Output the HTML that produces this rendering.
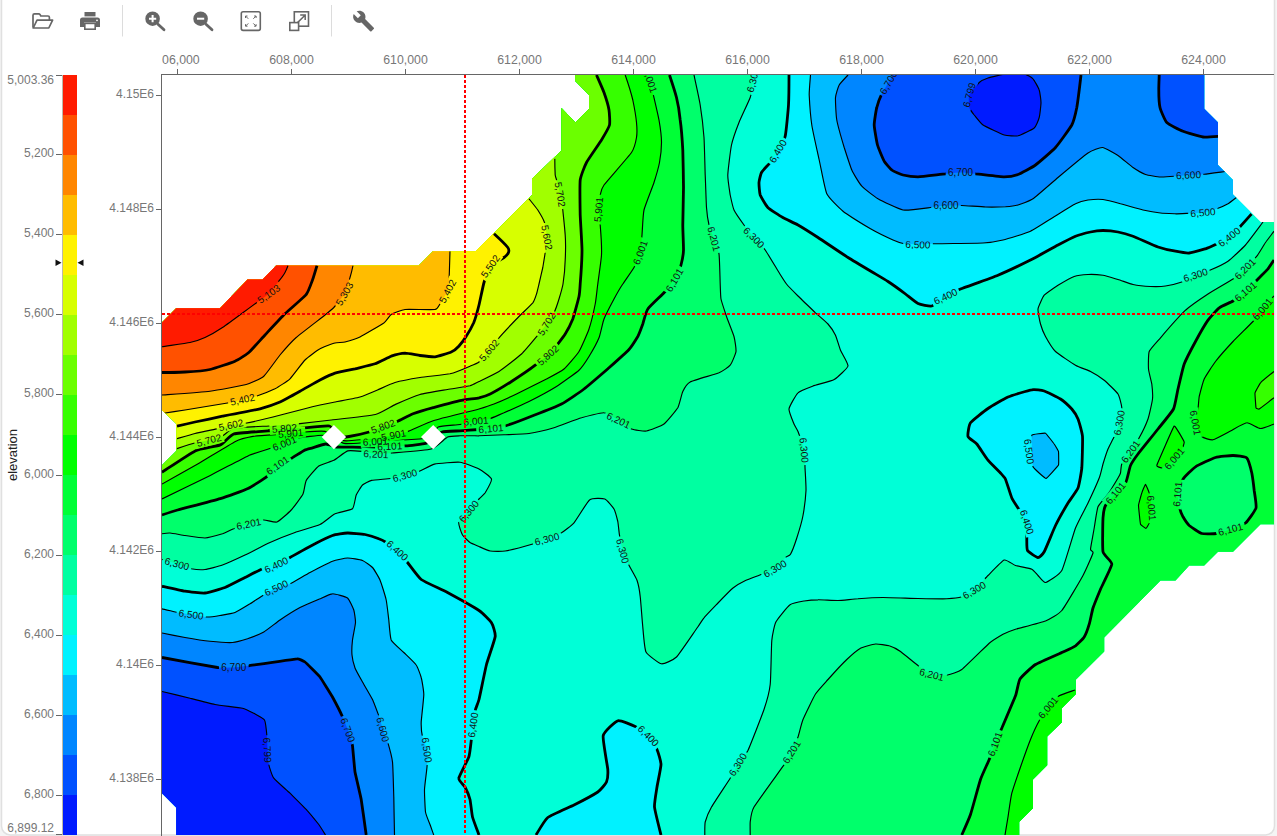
<!DOCTYPE html>
<html><head><meta charset="utf-8"><title>Contour map</title>
<style>html,body{margin:0;padding:0;background:#f4f4f4;overflow:hidden}svg{display:block}text{font-family:"Liberation Sans",sans-serif}</style></head><body>
<svg width="1277" height="836" viewBox="0 0 1277 836">
<rect x="1.5" y="-20" width="1273" height="855" rx="9" ry="9" fill="#fff" stroke="#e0e0e0" stroke-width="1.5"/>

<g id="toolbar">
<line x1="122.5" y1="5" x2="122.5" y2="36.5" stroke="#dcdcdc" stroke-width="1"/>
<line x1="331.5" y1="5" x2="331.5" y2="36.5" stroke="#dcdcdc" stroke-width="1"/>
<g fill="none" stroke="#666" stroke-width="1.7" stroke-linejoin="round">
<path d="M33 27.5 V15.3 Q33 13.8 34.5 13.8 H38.6 Q39.6 13.8 40.1 14.7 L40.8 16 H48 Q49.4 16 49.4 17.4 V20"/>
<path d="M33.2 28 L37 20.2 H52.6 L48.8 28 Z"/>
</g>
<g fill="#666">
<rect x="84.5" y="12" width="11" height="4.4"/>
<path d="M82.5 17.6 H97.5 Q100 17.6 100 20.1 V27 H96 V22.6 H84 V27 H80 V20.1 Q80 17.6 82.5 17.6 Z"/>
<rect x="84.8" y="23.4" width="10.4" height="5.8" fill="#fff" stroke="#666" stroke-width="1.6"/>
<circle cx="97" cy="20.3" r="0.9" fill="#fff"/>
</g>
<g>
<circle cx="152.6" cy="18.7" r="6.1" fill="#666" stroke="#666" stroke-width="2.4"/>
<path d="M149 18.7 H156.2 M152.6 15.1 V22.3" stroke="#fff" stroke-width="2" fill="none"/>
<line x1="158" y1="24.2" x2="164" y2="29.8" stroke="#666" stroke-width="2.8" stroke-linecap="round"/>
<circle cx="200.6" cy="18.7" r="6.1" fill="#666" stroke="#666" stroke-width="2.4"/>
<path d="M197 18.7 H204.2" stroke="#fff" stroke-width="2" fill="none"/>
<line x1="206" y1="24.2" x2="212" y2="29.8" stroke="#666" stroke-width="2.8" stroke-linecap="round"/>
</g>
<g fill="none" stroke="#666" stroke-width="1.6">
<rect x="241.3" y="11.8" width="19" height="18.6" rx="1.8"/>
<g stroke-width="1">
<path d="M245.5 18 V16 H247.5 M245.7 16.2 L248.3 18.8"/>
<path d="M256.1 18 V16 H254.1 M255.9 16.2 L253.3 18.8"/>
<path d="M245.5 24.2 V26.2 H247.5 M245.7 26 L248.3 23.4"/>
<path d="M256.1 24.2 V26.2 H254.1 M255.9 26 L253.3 23.4"/>
</g>
</g>
<g fill="none" stroke="#666" stroke-width="1.6">
<rect x="294.3" y="11.8" width="14.2" height="14.4"/>
<rect x="289.8" y="22.6" width="8.8" height="7.8" fill="#fff"/>
<path d="M297.5 22.6 L305 15.2 M300.2 15 H305.2 V20" stroke-width="1.5"/>
</g>
<path transform="translate(352.2,9.6) scale(0.95)" fill="#666" d="M22.7 19l-9.1-9.1c.9-2.3.4-5-1.5-6.9-2-2-5-2.4-7.4-1.3L9 6 6 9 1.6 4.7C.4 7.1.9 10.1 2.9 12.1c1.9 1.9 4.6 2.4 6.9 1.5l9.1 9.1c.4.4 1 .4 1.4 0l2.3-2.3c.5-.4.5-1.1.1-1.4z"/>
</g>

<rect x="63" y="75" width="14" height="40" fill="#ff1b00"/>
<rect x="63" y="115" width="14" height="40" fill="#ff5100"/>
<rect x="63" y="155" width="14" height="40" fill="#ff8600"/>
<rect x="63" y="195" width="14" height="40" fill="#ffbc00"/>
<rect x="63" y="235" width="14" height="40" fill="#fff200"/>
<rect x="63" y="275" width="14" height="40" fill="#d7ff00"/>
<rect x="63" y="315" width="14" height="40" fill="#a1ff00"/>
<rect x="63" y="355" width="14" height="40" fill="#6bff00"/>
<rect x="63" y="395" width="14" height="40" fill="#36ff00"/>
<rect x="63" y="435" width="14" height="40" fill="#00ff00"/>
<rect x="63" y="475" width="14" height="40" fill="#00ff36"/>
<rect x="63" y="515" width="14" height="40" fill="#00ff6b"/>
<rect x="63" y="555" width="14" height="40" fill="#00ffa1"/>
<rect x="63" y="595" width="14" height="40" fill="#00ffd7"/>
<rect x="63" y="635" width="14" height="40" fill="#00f2ff"/>
<rect x="63" y="675" width="14" height="40" fill="#00bcff"/>
<rect x="63" y="715" width="14" height="40" fill="#0086ff"/>
<rect x="63" y="755" width="14" height="40" fill="#0051ff"/>
<rect x="63" y="795" width="14" height="40" fill="#001bff"/>
<line x1="62.5" y1="75" x2="62.5" y2="835" stroke="#bdb9a8" stroke-width="1"/>
<g fill="#777" font-size="12px" text-anchor="end">
<text x="54" y="157.3">5,200</text>
<text x="54" y="237.3">5,400</text>
<text x="54" y="317.3">5,600</text>
<text x="54" y="397.3">5,800</text>
<text x="54" y="478.3">6,000</text>
<text x="54" y="558.3">6,200</text>
<text x="54" y="638.3">6,400</text>
<text x="54" y="718.3">6,600</text>
<text x="54" y="798.3">6,800</text>
<text x="54" y="83.6">5,003.36</text>
<text x="54" y="831.8">6,899.12</text>
</g>
<g stroke="#666" stroke-width="1">
<line x1="56" y1="154.5" x2="62" y2="154.5"/>
<line x1="56" y1="234.5" x2="62" y2="234.5"/>
<line x1="56" y1="314.5" x2="62" y2="314.5"/>
<line x1="56" y1="394.5" x2="62" y2="394.5"/>
<line x1="56" y1="475.5" x2="62" y2="475.5"/>
<line x1="56" y1="555.5" x2="62" y2="555.5"/>
<line x1="56" y1="635.5" x2="62" y2="635.5"/>
<line x1="56" y1="715.5" x2="62" y2="715.5"/>
<line x1="56" y1="795.5" x2="62" y2="795.5"/>
<line x1="56" y1="75.5" x2="62" y2="75.5"/><line x1="56" y1="834.5" x2="62" y2="834.5"/>
</g>
<path d="M55.5 259.5 L61.5 262.7 L55.5 266 Z M83.5 259.5 L77.5 262.7 L83.5 266 Z" fill="#111"/>
<text transform="translate(16.8,455) rotate(-90)" text-anchor="middle" font-size="13px" fill="#222">elevation</text>
<g stroke="#666" stroke-width="1">
<line x1="161.5" y1="74" x2="161.5" y2="836"/><line x1="161" y1="74.5" x2="1274" y2="74.5"/>
<line x1="177.5" y1="69" x2="177.5" y2="74"/>
<line x1="291.5" y1="69" x2="291.5" y2="74"/>
<line x1="405.5" y1="69" x2="405.5" y2="74"/>
<line x1="519.5" y1="69" x2="519.5" y2="74"/>
<line x1="633.5" y1="69" x2="633.5" y2="74"/>
<line x1="747.5" y1="69" x2="747.5" y2="74"/>
<line x1="861.5" y1="69" x2="861.5" y2="74"/>
<line x1="975.5" y1="69" x2="975.5" y2="74"/>
<line x1="1089.5" y1="69" x2="1089.5" y2="74"/>
<line x1="1203.5" y1="69" x2="1203.5" y2="74"/>
<line x1="156" y1="95.5" x2="161" y2="95.5"/>
<line x1="156" y1="209.5" x2="161" y2="209.5"/>
<line x1="156" y1="323.5" x2="161" y2="323.5"/>
<line x1="156" y1="437.5" x2="161" y2="437.5"/>
<line x1="156" y1="551.5" x2="161" y2="551.5"/>
<line x1="156" y1="665.5" x2="161" y2="665.5"/>
<line x1="156" y1="779.5" x2="161" y2="779.5"/>
</g>
<g fill="#777" font-size="12px">
<g font-size="12.3px">
<text x="199.7" y="63.5" text-anchor="end">06,000</text></g>
<g font-size="12.3px">
<text x="291.5" y="63.5" text-anchor="middle">608,000</text></g>
<g font-size="12.3px">
<text x="405.5" y="63.5" text-anchor="middle">610,000</text></g>
<g font-size="12.3px">
<text x="519.5" y="63.5" text-anchor="middle">612,000</text></g>
<g font-size="12.3px">
<text x="633.5" y="63.5" text-anchor="middle">614,000</text></g>
<g font-size="12.3px">
<text x="747.5" y="63.5" text-anchor="middle">616,000</text></g>
<g font-size="12.3px">
<text x="861.5" y="63.5" text-anchor="middle">618,000</text></g>
<g font-size="12.3px">
<text x="975.5" y="63.5" text-anchor="middle">620,000</text></g>
<g font-size="12.3px">
<text x="1089.5" y="63.5" text-anchor="middle">622,000</text></g>
<g font-size="12.3px">
<text x="1203.5" y="63.5" text-anchor="middle">624,000</text></g>
<text x="154" y="98.0" text-anchor="end">4.15E6</text>
<text x="154" y="212.0" text-anchor="end">4.148E6</text>
<text x="154" y="326.0" text-anchor="end">4.146E6</text>
<text x="154" y="440.0" text-anchor="end">4.144E6</text>
<text x="154" y="554.0" text-anchor="end">4.142E6</text>
<text x="154" y="668.0" text-anchor="end">4.14E6</text>
<text x="154" y="782.0" text-anchor="end">4.138E6</text>
</g>
<defs><clipPath id="dataclip"><path d="M162 322.5L176.2 308.2L220 308.2L247.5 279.5L262.5 279.5L276.2 265.5L418.8 265.5L433 251.2L475.5 251.2L532 195L532 178.8L561.5 150.5L561.5 108L575.4 122.6L589 108.8L589 95L575.2 81L575.2 75L1204.2 75L1204.2 108.8L1218 122.5L1218 165L1233 180L1233 194.5L1260.5 222L1274 222L1274 524.2L1260.5 524.2L1233 551.8L1218 551.8L1204.2 565.5L1189.2 565.5L1175.5 580.5L1160.5 580.5L1104.2 637.5L1104.2 651.5L1076 679.5L1076 694L1061.8 708.2L1061.8 722.5L1047.2 736.5L1047.2 765.2L1033 779.5L1033 808.2L1019.2 822L1019.2 835L176.2 835L176.2 807.5L162 793.2L162 465.3L176.3 450.9L176.3 423.8L162 410Z"/></clipPath>
<mask id="lblmask" maskUnits="userSpaceOnUse" x="150" y="60" width="1140" height="790"><rect x="150" y="60" width="1140" height="790" fill="#fff"/>
<rect x="-14.8" y="-5.5" width="29.6" height="11" fill="#000" transform="translate(268.8,293.8) rotate(-35)"/>
<rect x="-14.8" y="-5.5" width="29.6" height="11" fill="#000" transform="translate(344.5,293.8) rotate(-60)"/>
<rect x="-14.8" y="-5.5" width="29.6" height="11" fill="#000" transform="translate(447.5,291.2) rotate(-62)"/>
<rect x="-14.8" y="-5.5" width="29.6" height="11" fill="#000" transform="translate(242.5,399.5) rotate(-12)"/>
<rect x="-14.8" y="-5.5" width="29.6" height="11" fill="#000" transform="translate(490.2,266.2) rotate(-55)"/>
<rect x="-14.8" y="-5.5" width="29.6" height="11" fill="#000" transform="translate(547,237.5) rotate(80)"/>
<rect x="-14.8" y="-5.5" width="29.6" height="11" fill="#000" transform="translate(489,350.2) rotate(-50)"/>
<rect x="-14.8" y="-5.5" width="29.6" height="11" fill="#000" transform="translate(231,425) rotate(-12)"/>
<rect x="-14.8" y="-5.5" width="29.6" height="11" fill="#000" transform="translate(560.2,194.5) rotate(80)"/>
<rect x="-14.8" y="-5.5" width="29.6" height="11" fill="#000" transform="translate(546.5,324) rotate(-58)"/>
<rect x="-14.8" y="-5.5" width="29.6" height="11" fill="#000" transform="translate(209,440.2) rotate(-15)"/>
<rect x="-14.8" y="-5.5" width="29.6" height="11" fill="#000" transform="translate(547.8,355.2) rotate(-42)"/>
<rect x="-14.8" y="-5.5" width="29.6" height="11" fill="#000" transform="translate(383,426.4) rotate(-20)"/>
<rect x="-14.8" y="-5.5" width="29.6" height="11" fill="#000" transform="translate(284.4,428.2) rotate(-5)"/>
<rect x="-14.8" y="-5.5" width="29.6" height="11" fill="#000" transform="translate(598.5,209.5) rotate(-85)"/>
<rect x="-14.8" y="-5.5" width="29.6" height="11" fill="#000" transform="translate(393.6,435.2) rotate(-12)"/>
<rect x="-14.8" y="-5.5" width="29.6" height="11" fill="#000" transform="translate(290.7,433.3) rotate(-5)"/>
<rect x="-14.8" y="-5.5" width="29.6" height="11" fill="#000" transform="translate(650.3,80.5) rotate(72)"/>
<rect x="-14.8" y="-5.5" width="29.6" height="11" fill="#000" transform="translate(640.2,252.5) rotate(-70)"/>
<rect x="-14.8" y="-5.5" width="29.6" height="11" fill="#000" transform="translate(476,421) rotate(-5)"/>
<rect x="-14.8" y="-5.5" width="29.6" height="11" fill="#000" transform="translate(375.4,441.5) rotate(-3)"/>
<rect x="-14.8" y="-5.5" width="29.6" height="11" fill="#000" transform="translate(284.4,443.3) rotate(-22)"/>
<rect x="-14.8" y="-5.5" width="29.6" height="11" fill="#000" transform="translate(674.5,280) rotate(-60)"/>
<rect x="-14.8" y="-5.5" width="29.6" height="11" fill="#000" transform="translate(491,428.5) rotate(-5)"/>
<rect x="-14.8" y="-5.5" width="29.6" height="11" fill="#000" transform="translate(389.8,446.3) rotate(-3)"/>
<rect x="-14.8" y="-5.5" width="29.6" height="11" fill="#000" transform="translate(277.5,465.3) rotate(-35)"/>
<rect x="-14.8" y="-5.5" width="29.6" height="11" fill="#000" transform="translate(714,238.8) rotate(75)"/>
<rect x="-14.8" y="-5.5" width="29.6" height="11" fill="#000" transform="translate(618.5,420.2) rotate(25)"/>
<rect x="-14.8" y="-5.5" width="29.6" height="11" fill="#000" transform="translate(376,454) rotate(3)"/>
<rect x="-14.8" y="-5.5" width="29.6" height="11" fill="#000" transform="translate(248.8,523.8) rotate(-12)"/>
<rect x="-14.8" y="-5.5" width="29.6" height="11" fill="#000" transform="translate(753,80) rotate(-75)"/>
<rect x="-14.8" y="-5.5" width="29.6" height="11" fill="#000" transform="translate(754,237.5) rotate(45)"/>
<rect x="-14.8" y="-5.5" width="29.6" height="11" fill="#000" transform="translate(804.2,450.2) rotate(85)"/>
<rect x="-14.8" y="-5.5" width="29.6" height="11" fill="#000" transform="translate(775,568.5) rotate(-30)"/>
<rect x="-14.8" y="-5.5" width="29.6" height="11" fill="#000" transform="translate(622.8,551) rotate(75)"/>
<rect x="-14.8" y="-5.5" width="29.6" height="11" fill="#000" transform="translate(547,539) rotate(-15)"/>
<rect x="-14.8" y="-5.5" width="29.6" height="11" fill="#000" transform="translate(468.8,511.2) rotate(-50)"/>
<rect x="-14.8" y="-5.5" width="29.6" height="11" fill="#000" transform="translate(404.9,475.4) rotate(-15)"/>
<rect x="-14.8" y="-5.5" width="29.6" height="11" fill="#000" transform="translate(177,563.8) rotate(15)"/>
<rect x="-14.8" y="-5.5" width="29.6" height="11" fill="#000" transform="translate(1195.5,275) rotate(-18)"/>
<rect x="-14.8" y="-5.5" width="29.6" height="11" fill="#000" transform="translate(1119.2,422.8) rotate(-80)"/>
<rect x="-14.8" y="-5.5" width="29.6" height="11" fill="#000" transform="translate(974.2,590) rotate(-30)"/>
<rect x="-14.8" y="-5.5" width="29.6" height="11" fill="#000" transform="translate(737.8,764.5) rotate(-58)"/>
<rect x="-14.8" y="-5.5" width="29.6" height="11" fill="#000" transform="translate(777.8,151.2) rotate(-60)"/>
<rect x="-14.8" y="-5.5" width="29.6" height="11" fill="#000" transform="translate(945.5,296.5) rotate(-25)"/>
<rect x="-14.8" y="-5.5" width="29.6" height="11" fill="#000" transform="translate(1229.2,237) rotate(-38)"/>
<rect x="-14.8" y="-5.5" width="29.6" height="11" fill="#000" transform="translate(276.2,565) rotate(-25)"/>
<rect x="-14.8" y="-5.5" width="29.6" height="11" fill="#000" transform="translate(397.5,550.5) rotate(42)"/>
<rect x="-14.8" y="-5.5" width="29.6" height="11" fill="#000" transform="translate(473,725) rotate(-82)"/>
<rect x="-14.8" y="-5.5" width="29.6" height="11" fill="#000" transform="translate(648.5,735.8) rotate(45)"/>
<rect x="-14.8" y="-5.5" width="29.6" height="11" fill="#000" transform="translate(1027,522) rotate(72)"/>
<rect x="-14.8" y="-5.5" width="29.6" height="11" fill="#000" transform="translate(918,244.5) rotate(2)"/>
<rect x="-14.8" y="-5.5" width="29.6" height="11" fill="#000" transform="translate(1203,212.5) rotate(-5)"/>
<rect x="-14.8" y="-5.5" width="29.6" height="11" fill="#000" transform="translate(191.2,614.5) rotate(8)"/>
<rect x="-14.8" y="-5.5" width="29.6" height="11" fill="#000" transform="translate(276.2,588) rotate(-25)"/>
<rect x="-14.8" y="-5.5" width="29.6" height="11" fill="#000" transform="translate(427,750) rotate(82)"/>
<rect x="-14.8" y="-5.5" width="29.6" height="11" fill="#000" transform="translate(1029.2,451.5) rotate(82)"/>
<rect x="-14.8" y="-5.5" width="29.6" height="11" fill="#000" transform="translate(946,205.5) rotate(0)"/>
<rect x="-14.8" y="-5.5" width="29.6" height="11" fill="#000" transform="translate(1188.5,175) rotate(-3)"/>
<rect x="-14.8" y="-5.5" width="29.6" height="11" fill="#000" transform="translate(383,729.5) rotate(75)"/>
<rect x="-14.8" y="-5.5" width="29.6" height="11" fill="#000" transform="translate(888.5,82.5) rotate(-60)"/>
<rect x="-14.8" y="-5.5" width="29.6" height="11" fill="#000" transform="translate(960.5,172.5) rotate(0)"/>
<rect x="-14.8" y="-5.5" width="29.6" height="11" fill="#000" transform="translate(233.8,667.5) rotate(0)"/>
<rect x="-14.8" y="-5.5" width="29.6" height="11" fill="#000" transform="translate(348,730) rotate(70)"/>
<rect x="-14.8" y="-5.5" width="29.6" height="11" fill="#000" transform="translate(969.2,95) rotate(-75)"/>
<rect x="-14.8" y="-5.5" width="29.6" height="11" fill="#000" transform="translate(267.5,750) rotate(87)"/>
<rect x="-14.8" y="-5.5" width="29.6" height="11" fill="#000" transform="translate(1245,268.8) rotate(-45)"/>
<rect x="-14.8" y="-5.5" width="29.6" height="11" fill="#000" transform="translate(1130.5,451.5) rotate(-55)"/>
<rect x="-14.8" y="-5.5" width="29.6" height="11" fill="#000" transform="translate(931.8,674.5) rotate(15)"/>
<rect x="-14.8" y="-5.5" width="29.6" height="11" fill="#000" transform="translate(791.5,752) rotate(-58)"/>
<rect x="-14.8" y="-5.5" width="29.6" height="11" fill="#000" transform="translate(1245.5,291.5) rotate(-40)"/>
<rect x="-14.8" y="-5.5" width="29.6" height="11" fill="#000" transform="translate(1115.5,493) rotate(-50)"/>
<rect x="-14.8" y="-5.5" width="29.6" height="11" fill="#000" transform="translate(995,744) rotate(-70)"/>
<rect x="-14.8" y="-5.5" width="29.6" height="11" fill="#000" transform="translate(1230.5,529.2) rotate(-15)"/>
<rect x="-14.8" y="-5.5" width="29.6" height="11" fill="#000" transform="translate(1177.5,494.2) rotate(-85)"/>
<rect x="-14.8" y="-5.5" width="29.6" height="11" fill="#000" transform="translate(1262.5,309) rotate(-50)"/>
<rect x="-14.8" y="-5.5" width="29.6" height="11" fill="#000" transform="translate(1195.5,422.8) rotate(80)"/>
<rect x="-14.8" y="-5.5" width="29.6" height="11" fill="#000" transform="translate(1174.2,458.5) rotate(-50)"/>
<rect x="-14.8" y="-5.5" width="29.6" height="11" fill="#000" transform="translate(1151.8,508) rotate(85)"/>
<rect x="-14.8" y="-5.5" width="29.6" height="11" fill="#000" transform="translate(1048,707.5) rotate(-50)"/>
</mask>
<clipPath id="mapclip"><rect x="162" y="75" width="1112.5" height="760"/></clipPath></defs>
<g clip-path="url(#mapclip)">
<g clip-path="url(#dataclip)">
<rect x="160" y="70" width="1120" height="770" fill="#00ffa1"/>
<path d="M694 75C694.5 77.4 699.5 100 700.2 105C701 110 703.6 131.9 704 137.5C704.4 143.1 705 169.4 705.2 175C705.5 180.6 706.2 203.5 706.5 207.5C706.8 211.5 708.4 222.5 709 225C709.6 227.5 713.2 236.4 714 238.8C714.8 241.1 718.5 250.1 719 253.8C719.5 257.4 720.1 280.4 720.2 284C720.4 287.6 720.5 296.4 721 299C721.5 301.6 725.5 313.5 726.5 316.5C727.5 319.5 733.2 333.7 734 336.5C734.8 339.3 736.3 349.2 736 351.5C735.7 353.8 731.6 363.6 730.2 365.2C728.9 366.9 722.2 371.4 719 372.8C715.8 374.1 693.1 380.5 690.2 382C687.4 383.5 683.8 389.4 682.8 391.5C681.8 393.6 679.2 405.1 677.8 407.8C676.2 410.4 666.5 422.1 664 424C661.5 425.9 649.1 430.6 646.5 431C643.9 431.4 633.7 429.9 631.5 429C629.3 428.1 620.7 421.6 618.5 420.2C616.3 418.9 607 412.9 604 412.8C601 412.6 585.5 416.6 581.5 417.8C577.5 418.9 558.2 426.5 554 427.8C549.8 429 533 432.9 529 433.5C525 434.1 508 434.6 504 434.8C500 434.9 482.5 435.7 479 435.8C475.5 435.8 462.5 435.7 460 435.8C457.5 435.9 449.9 436 447.6 437.1C445.3 438.2 435.7 447.7 431.3 449C426.9 450.3 396.7 452.6 392.3 453C387.9 453.4 378.4 454.1 376 454C373.6 453.9 365.1 451.7 362.8 451.5C360.5 451.3 350 450.2 347.7 450.9C345.4 451.6 336.2 459.1 333.9 460.3C331.6 461.5 321 464.4 318.8 466C316.6 467.6 307.6 478.2 306.3 480.4C305 482.6 304.2 491.6 303 494C301.8 496.4 293.3 507.8 291.2 510C289.2 512.2 279.2 521.2 277 522C274.8 522.8 266 519.9 263.8 520C261.5 520.1 251.2 523 248.8 523.8C246.3 524.5 235.8 528 233.8 528.8C231.7 529.5 224.8 533 222.5 533.8C220.2 534.5 208 537.9 205 538C202 538.1 187.8 535.9 185 535.5C182.2 535.1 171.8 533.1 170 533C168.2 532.9 162.6 533.7 162 533.8L140 534L140 60L694 60Z" fill="#00ff6b"/>
<path d="M1274 231.2C1273.3 232.2 1266.9 240.5 1265.5 242.5C1264.1 244.5 1258.4 254.2 1256.8 256.2C1255.1 258.4 1246.9 266.9 1245 268.8C1243.1 270.6 1236 277 1233 279C1230 281 1211.8 291.5 1208 294C1204.2 296.5 1189.3 306.8 1185.5 310.2C1181.7 313.8 1163.4 334.4 1160.5 337.8C1157.6 341.1 1150.2 349 1149.2 351.5C1148.3 354 1148.3 366.4 1148.5 369C1148.7 371.6 1151.4 381.6 1151.8 384C1152.1 386.4 1152.8 396.2 1152.5 399C1152.2 401.8 1149.1 415.9 1148 419C1146.9 422.1 1140.7 435.1 1139.2 437.8C1137.8 440.4 1131.9 449.4 1130.5 451.5C1129.1 453.6 1122.5 462.3 1121.8 464C1121 465.7 1120.8 471.9 1120.5 473C1120.2 474.1 1119 476.3 1118 478C1117 479.7 1109.6 491.9 1108 494.2C1106.4 496.6 1099.1 504.1 1098 506.8C1096.9 509.4 1094.8 524.6 1094.2 528C1093.7 531.4 1090.6 547.2 1090.5 549.2C1090.4 551.2 1093.6 550.9 1093 553C1092.4 555.1 1085.5 570.9 1083 575.5C1080.5 580.1 1064.8 606.9 1061.8 610.5C1058.8 614.1 1049.2 619.5 1045.5 621C1041.8 622.5 1018.9 628.2 1015.5 629.2C1012.1 630.3 1005.1 633.1 1003 634.2C1000.9 635.4 992.5 640.4 989.2 643.2C986 646.1 965.1 667 961.8 669.5C958.4 672 949.9 674.6 947.5 675C945.1 675.4 934 675.2 931.8 674.5C929.5 673.8 921.8 668.3 919.2 666.5C916.8 664.7 902.9 653.2 900.5 651.5C898.1 649.8 891.2 646.4 889.2 645.8C887.2 645.1 877.8 643.8 875.5 644C873.2 644.2 862.8 647 860.5 648.2C858.2 649.5 849.4 657 846.8 659.5C844.1 662 830.5 676.7 828 679.5C825.5 682.3 817.5 690.8 815.5 694C813.5 697.2 804.4 716.1 803 719.5C801.6 722.9 798.9 734.4 798 737C797.1 739.6 792.5 749.9 791.5 752C790.5 754.1 788.2 758.9 785.2 763.2C782.2 767.6 756.8 802.3 754 807C751.2 811.7 750.5 819.8 750.2 822C750 824.2 750.2 834 750.2 835L750 850L1290 850L1290 231Z" fill="#00ff6b"/>
<path d="M669.5 75C670.1 76.8 675.6 93.9 676.5 97.5C677.4 101.1 679.8 115.8 680.2 120C680.8 124.2 682.5 144.6 682.8 150C683 155.4 683.5 181.5 683.5 187.5C683.5 193.5 682.8 220 682.8 225C682.8 230 683.6 246.8 683.5 250C683.4 253.2 681.6 262.8 681 265C680.4 267.2 677.3 274.9 676 277C674.7 279.1 667.5 288.9 665.2 291.5C663 294.1 649.5 306.4 647.8 309C646 311.6 643.5 321.8 642.8 324C642 326.2 638.9 334.5 637.8 336.5C636.6 338.5 631.3 347 629 349.5C626.7 352 612.6 364.6 609 367.8C605.4 370.9 587.8 386.1 584 389C580.2 391.9 565.5 401.9 561.5 404C557.5 406.1 538.5 413.5 534 415.2C529.5 417 508.7 424.9 505.2 426C501.8 427.1 493.1 428.2 491 428.5C488.9 428.8 481.5 429.3 479 429.5C476.5 429.7 463 430.6 460 430.8C457 431 444.1 431.4 442 432C439.9 432.6 434.5 437.1 433.2 438C431.9 438.9 427.8 442.8 425.6 443.4C423.4 444 408.4 445.7 405.5 445.9C402.6 446.1 392.2 446.1 389.8 446.3C387.4 446.5 378.6 447.7 375.4 447.8C372.2 447.9 353.4 447.2 350.3 447.1C347.2 447 338.4 447.2 336.4 447C334.4 446.8 327.7 443.9 325.8 444C323.9 444.1 314.3 447.3 312.6 447.8C310.9 448.3 306.3 449.3 304.5 450.2C302.7 451.1 292.9 457.6 290.7 458.8C288.5 460 279.4 463.9 277.5 465.3C275.6 466.7 269.2 474.7 266.8 476.6C264.4 478.5 251.7 486.7 248 488.5C244.3 490.3 225.9 496.9 220.3 498.6C214.7 500.3 182.3 508.7 177.6 510C172.9 511.3 163.2 514.6 162 515L140 515L140 60L669 60Z" fill="#00ff36"/>
<path d="M1274 260C1273.5 260.7 1269.4 267.1 1268 268.8C1266.6 270.4 1258.5 278.4 1256.8 280.2C1255 282.1 1247.4 289.8 1245.5 291.5C1243.6 293.2 1235.1 299.7 1233 301C1230.9 302.3 1221.2 306.2 1219.2 307.8C1217.2 309.3 1209.9 317.6 1208 320.2C1206.1 322.9 1197.4 338 1195.5 341.5C1193.6 345 1185.7 360.2 1184.2 364C1182.8 367.8 1178.9 385.4 1178 389C1177.1 392.6 1175.1 405.8 1173.5 409C1171.9 412.2 1160.8 425.4 1158 429C1155.2 432.6 1140.2 451.1 1138 454C1135.8 456.9 1131.5 463.3 1130.5 465.5C1129.5 467.7 1127.2 479.6 1126 481.8C1124.8 483.9 1117.1 491.1 1115.5 493C1113.9 494.9 1106.5 503.5 1105.5 505.5C1104.5 507.5 1103.2 514.3 1103 518C1102.8 521.7 1102.3 548 1103 551.8C1103.7 555.5 1112 561.2 1111.8 564.2C1111.5 567.2 1102 585.8 1100.5 589.2C1099 592.8 1093.9 605.2 1093 608C1092.1 610.8 1090 621.9 1089.2 624.2C1088.5 626.6 1085.3 635.3 1084.2 637C1083.2 638.7 1077.2 644.5 1075.5 645.8C1073.8 647 1066.2 650.5 1063 652C1059.8 653.5 1038.9 662.3 1035.5 664.5C1032.1 666.7 1021.6 676.5 1020 679C1018.4 681.5 1017 691.8 1015.5 695.8C1014 699.7 1003.4 724.4 1001.8 728.2C1000.1 732.1 996 741.5 995 744C994 746.5 990.4 756.7 989.2 759.5C988.1 762.3 982 775.1 980.5 779.5C979 783.9 972 810.1 970.5 814.5C969 818.9 962.5 833.4 961.8 835L961 850L1290 850L1290 260Z" fill="#00ff36"/>
<path d="M647 75C647.2 75.6 648.5 81.1 649 82.5C649.5 83.9 652 89.5 652.8 92.5C653.5 95.5 658.3 116 659 120C659.7 124 661.5 139.1 661.5 142.5C661.5 145.9 660.1 159.3 659.5 162.5C658.9 165.7 655.2 178.7 654 182.5C652.8 186.3 645 205.8 644 210C643 214.2 642.3 231.6 642 235C641.7 238.4 640.9 249.9 640.2 252.5C639.6 255.1 635.4 265 634 267.5C632.6 270 624.4 281.5 622.8 284C621.1 286.5 615.5 296.2 614 299C612.5 301.8 605.2 315.9 604 319C602.8 322.1 600.2 334.8 599 337.8C597.8 340.8 590.6 353.9 589 356.5C587.4 359.1 581.6 367.9 579 370.2C576.4 372.6 560.5 384 556.5 386.5C552.5 389 533.2 399.4 529 401.5C524.8 403.6 507.2 411.4 504 412.8C500.8 414.1 491.2 418.3 489 419C486.8 419.7 478.3 420.6 476 421C473.7 421.4 463 424 460 424.5C457 425 440.4 426 438.2 427C436 428 434.5 436 433 437C431.5 438 422.9 438.7 419.3 439C415.7 439.3 391.5 440.7 388 440.9C384.5 441.1 377.4 441.4 375.4 441.5C373.4 441.6 365.3 442.5 362.8 442.7C360.3 442.9 346.3 443.8 344 443.4C341.7 443 335.8 438.7 334 438C332.2 437.3 324.9 435.2 322 435.2C319.1 435.2 301.2 437.3 298.2 437.9C295.2 438.5 286.6 442.5 284.4 443.3C282.2 444.1 273.5 447.3 270.6 448.3C267.7 449.3 252.8 453.7 248 455.9C243.2 458.1 217.2 472 210.3 475.4C203.4 478.8 165.9 497.1 162 499L140 499L140 60L647 60Z" fill="#00ff00"/>
<path d="M1274 296C1273.1 297 1264.2 307 1262.5 309C1260.8 311 1255.4 318.9 1253 321.5C1250.6 324.1 1236 338.3 1233 341.5C1230 344.7 1217.8 358.5 1215.5 361.5C1213.2 364.5 1205.5 376.2 1204.2 379C1203 381.8 1199.8 394.1 1199.2 396.5C1198.8 398.9 1198.3 406.9 1198 409C1197.7 411.1 1195.2 420.6 1195.5 422.8C1195.8 424.9 1200.3 435.1 1201.8 436.5C1203.2 437.9 1210.7 440.2 1213 439.8C1215.3 439.3 1227.8 432.4 1230.5 431C1233.2 429.6 1244.3 422.9 1246.8 422.8C1249.2 422.6 1258.3 428.4 1260.5 428.5C1262.7 428.6 1272.9 424.4 1274 424L1290 424L1290 296Z" fill="#00ff00"/>
<path d="M1075 690C1073.7 690.5 1061.4 694.4 1059.2 695.8C1057.1 697.1 1049.6 705.5 1048 707.5C1046.4 709.5 1040.7 718.2 1039.2 720.8C1037.8 723.3 1032 735.8 1030.5 739.5C1029 743.2 1022 762.7 1020.5 767C1019 771.3 1012.8 789.2 1011.8 793.2C1010.8 797.2 1008.5 813.7 1008 817C1007.5 820.3 1005.2 833.6 1005 835L1005 850L1100 850L1100 690Z" fill="#00ff00"/>
<path d="M1174.2 426C1175.2 425.2 1184 441.2 1184.2 442C1184.5 442.8 1182.1 449.7 1181.8 450.2C1181.4 450.8 1174.9 457.9 1174.2 458.5C1173.6 459.1 1162.3 467.5 1161.8 467.8C1161.2 468 1156.3 466.6 1156.8 465.2C1157.2 463.9 1173.3 426.8 1174.2 426Z" fill="#00ff00"/>
<path d="M1145.5 484.2C1145.8 484.2 1149 492.2 1149.2 493C1149.5 493.8 1151.8 507 1151.8 508C1151.8 509 1149.4 522.3 1149.2 523C1149.1 523.7 1146.3 528.5 1146 528.5C1145.7 528.5 1140.8 525 1140.5 524.2C1140.2 523.5 1138.5 506.5 1138.5 505.5C1138.5 504.5 1141.5 493.7 1141.8 493C1142 492.3 1145.2 484.2 1145.5 484.2Z" fill="#00ff00"/>
<path d="M625.2 75C625.9 77 631.9 96.2 632.8 100C633.6 103.8 636.2 119.5 636.5 122.5C636.8 125.5 636.9 135.1 636.5 137.5C636.1 139.9 634.1 148.7 631.5 152.5C628.9 156.3 606.5 181.6 604 185C601.5 188.4 600.7 193 600.2 195C599.8 197 598.5 207.1 598.5 209.5C598.5 211.9 600 221.4 600.2 225C600.5 228.6 601.7 250.3 601.5 255C601.3 259.7 598.2 280.1 597.8 284C597.2 287.9 596 300.4 595.2 304C594.5 307.6 590.3 325.2 589 329C587.7 332.8 581 348.3 579 351.5C577 354.7 566.6 366.8 564 369C561.4 371.2 550.3 377 546.5 379C542.7 381 520.7 392 516.5 394C512.3 396 497 402.8 494 404C491 405.2 481.7 408.2 479 409C476.3 409.8 463.7 412.9 460 413.8C456.3 414.7 437.4 419.4 433.2 420.8C429 422.2 411.2 430.2 408 431.4C404.8 432.6 395.8 434.7 393.6 435.2C391.4 435.7 383.8 437.2 380 437.7C376.2 438.2 350.2 440.9 346.5 440.9C342.8 440.9 335.7 438.8 334 438C332.3 437.2 327.3 431.9 325 431.4C322.7 430.9 307.7 431.8 305 432C302.3 432.2 293 433.1 290.7 433.3C288.4 433.5 279.8 434.3 276.8 434.5C273.8 434.7 256.3 435.8 253 436.4C249.7 437 239.8 439.2 235.4 441.4C231 443.6 203.6 460.6 197.7 464C191.8 467.4 164.9 482.5 162 484.1L140 484L140 60L625 60Z" fill="#36ff00"/>
<path d="M1274 371.5C1273.5 371.9 1261.1 382 1260.5 382.8C1259.9 383.5 1255.2 391.9 1255 392.8C1254.8 393.6 1255.9 407.2 1256 407.8C1256.1 408.3 1258.7 409.3 1259.2 409C1259.8 408.7 1273.5 398.1 1274 397.8L1290 397L1290 371Z" fill="#36ff00"/>
<path d="M596.5 75C597.1 76.4 603 89.7 604 92.5C605 95.3 608.6 107.4 609 110C609.4 112.6 610.1 122.6 609.5 125C608.9 127.4 603.3 137 601.5 140C599.7 143 588.2 159.3 586.5 162.5C584.8 165.7 580.8 175.8 580.2 180C579.8 184.2 580.1 209.4 580.2 215C580.4 220.6 582 244.5 582 250C582 255.5 580.5 280.3 580.2 284C580 287.7 579.6 293.7 579 296.5C578.4 299.3 573.9 316 572.8 319C571.6 322 566.5 332 565.2 334C564 336 559.1 342.3 557.8 344C556.4 345.7 549.5 353.6 547.8 355.2C546 356.9 538.1 363.1 535.2 365.2C532.4 367.4 515.1 379.2 511.5 381.5C507.9 383.8 492.9 392.7 490.2 394C487.6 395.3 481.4 397.2 479 397.8C476.6 398.3 463.7 399.9 460 400.7C456.3 401.5 437 406.6 433.2 407.6C429.4 408.6 415.9 412.7 413 413.8C410.1 414.9 399.8 420.4 397.4 421.4C395 422.4 385.3 425.6 383 426.4C380.7 427.2 371.8 431.2 369.1 432C366.4 432.8 351.5 436.1 349 436.5C346.5 436.9 339.6 437.8 338 437C336.4 436.2 332.5 426.7 329.5 426C326.5 425.3 303.6 428.1 300 428.3C296.4 428.5 287 428 284.4 428.2C281.8 428.4 272 430.3 268 430.8C264 431.3 237.9 432.8 234.1 433.9C230.3 435 223.4 443.5 220.3 444.9C217.2 446.3 199.9 448.7 195.2 450.9C190.5 453.1 164.7 470.5 162 472.2L140 472L140 60L596 60Z" fill="#6bff00"/>
<path d="M554.8 158.8C554.8 160.1 555.1 173.2 555.2 175C555.4 176.8 556.6 179.7 557 181.2C557.4 182.8 559.8 192.2 560.2 194.5C560.7 196.8 562.4 206.8 562.8 210C563.1 213.2 565 231 565.2 235C565.5 239 565.4 256.1 565.2 260C565.1 263.9 563.5 280.9 563 284C562.5 287.1 559.7 296.7 559 299C558.3 301.3 555 310.8 554 312.8C553 314.8 547.8 322.2 546.5 324C545.2 325.8 539.8 332.9 537.8 335.2C535.8 337.6 524.6 351.1 521.5 354C518.4 356.9 502.4 369.3 499 371.5C495.6 373.7 481.3 380.4 479 381.5C476.7 382.6 472.5 385.1 470 385.8C467.5 386.4 451.5 388.8 447.5 389.5C443.5 390.2 424.2 393.3 420 394.5C415.8 395.7 399.1 402.8 395.5 404.4C391.9 406 380.5 413.3 375.4 414.5C370.3 415.7 337.4 419.3 331.4 420C325.4 420.7 304.7 423.1 300 423.6C295.3 424.1 278.3 425.3 273 425.7C267.7 426.1 238.1 427.4 234.1 428.2C230.1 429 224.8 434.8 222.8 435.8C220.8 436.8 211.2 439.6 209 440.2C206.8 440.8 197.8 442 195.2 442.7C192.6 443.4 178.5 448.1 177 448.6L140 449L140 140L554 140Z" fill="#a1ff00"/>
<path d="M529 198.8C529.7 199.7 536.5 208.1 537.8 210C539 211.9 543.8 220.3 544.5 222.5C545.2 224.7 546.9 235.1 547 237.5C547.1 239.9 545.6 250.1 545.2 252.5C544.9 254.9 543.2 265 542.8 267.5C542.2 270 539.5 281.9 539 284C538.5 286.1 537 292.5 536.5 294C536 295.5 534.4 300.8 532.8 302.8C531.1 304.8 519.2 316.2 516.5 319C513.8 321.8 501.2 335.2 499 337.8C496.8 340.2 490.6 348.3 489 350.2C487.4 352.2 480.5 360.7 479 362C477.5 363.3 472.3 365.3 470 366.2C467.7 367.2 454 372.9 450 373.8C446 374.6 424.4 376.8 420 377.5C415.6 378.2 398.4 381.5 395 382.5C391.6 383.5 380.3 388.8 377.5 390C374.7 391.2 363.4 396 360 397C356.6 398 338.2 401.4 335 402C331.8 402.6 322.8 404.4 320 405C317.2 405.6 303.8 409 300 410C296.2 411 277.4 415.9 273 417C268.6 418.1 248.8 422.6 245.4 423.2C242 423.8 233.3 424.5 231 425C228.7 425.5 219.4 428.2 216.5 428.9C213.6 429.6 198.2 432.7 195 433.5C191.8 434.3 178.4 438.3 177 438.7L140 439L140 180L529 180Z" fill="#d7ff00"/>
<path d="M494 233.8C495.1 234.8 506.6 246 507.8 247.5C508.9 249 508.8 251.7 508.5 252.5C508.2 253.3 505.5 256.4 504 257.5C502.5 258.6 491.9 264.2 490.2 266.2C488.6 268.2 484.9 279.4 484 282.5C483.1 285.6 479.8 301.8 479 305C478.2 308.2 474.8 320 473.8 322.5C472.7 325 467.4 334.4 466.2 336.2C465.1 338.1 459.9 345 458.8 346.2C457.6 347.5 453.1 351.2 451.2 352C449.4 352.8 437.5 356.5 435 356.8C432.5 357 422.4 355.8 420 355.5C417.6 355.2 407.3 353.2 405 353.2C402.7 353.3 393.6 355.4 391.2 356.2C388.9 357.1 377.9 362.8 375 363.8C372.1 364.8 358.2 368 355 368.8C351.8 369.5 337.8 372.4 335 373.2C332.2 374.1 322.8 378.6 320 380C317.2 381.4 303.2 389.5 300 391.2C296.8 393 283.2 400.6 280 402C276.8 403.4 264.6 407.6 260 408.8C255.4 409.9 227.7 415.2 222.5 416.2C217.3 417.3 198.6 421.2 195 422C191.4 422.8 178.4 425.9 177 426.2L140 426L140 200L494 200Z" fill="#fff200"/>
<path d="M450 251.2C449.9 253.2 449.4 273.1 449.2 276.2C449.1 279.4 448.2 289.1 447.5 291.2C446.8 293.4 441 302.3 440 303.8C439 305.2 437.8 309 435 309.5C432.2 310 408.5 309.1 405 309.5C401.5 309.9 392.9 313.4 391.2 314.5C389.6 315.6 386.2 321.2 383.8 323C381.2 324.8 363.1 335.5 360 337C356.9 338.5 347 341.5 345 342C343 342.5 337 342.5 335 343C333 343.5 322.4 347.4 320 348.8C317.6 350.1 307.4 357.6 305 360C302.6 362.4 292.4 376.4 290 378.8C287.6 381.1 277.7 387.4 275 388.8C272.3 390.1 258.9 395.4 256.2 396.2C253.7 397.1 244.8 399 242.5 399.5C240.2 400 232.1 402.2 227.5 403C222.9 403.8 190.2 409.2 185 410C179.8 410.8 163.8 413.2 162 413.5L140 413L140 230L450 230Z" fill="#ffbc00"/>
<path d="M353 265.5C352.8 266.5 350.7 275.2 350 277.5C349.3 279.8 345.8 291.4 344.5 293.8C343.2 296.1 335.3 305.8 333.8 307.5C332.2 309.2 328 312.6 325 315C322 317.4 299.9 334.3 296.2 337.5C292.6 340.7 282.6 351.9 280 355C277.4 358.1 266.4 373.9 263.8 376.2C261.1 378.6 250.6 383.3 246.2 384.5C241.9 385.7 216.7 390.4 210 391.2C203.3 392.1 165.8 394.7 162 395L140 395L140 240L353 240Z" fill="#ff8600"/>
<path d="M317 265.5C316.6 266.7 313.4 277.7 312.5 280C311.6 282.3 308.4 291.8 306.2 294.5C304.1 297.2 288.3 310.5 285 313.8C281.7 317 267.9 331.9 265 335C262.1 338.1 251.2 350.4 248.8 352.5C246.3 354.6 238.1 359.9 235 361.2C231.9 362.6 214 368.6 210 369.5C206 370.4 188.8 371.8 185 372C181.2 372.2 163.8 372.5 162 372.5L140 372L140 240L317 240Z" fill="#ff5100"/>
<path d="M288 265.5C287.8 266.1 285.7 271.2 285 272.5C284.3 273.8 280.1 279.6 278.8 281.2C277.4 282.9 270.6 292 268.8 293.8C266.9 295.5 258.4 301.5 256.2 303C254.2 304.5 245.2 311 242.5 313C239.8 315 225.5 325.5 222.5 327.5C219.5 329.5 207.6 336.3 205 337.5C202.4 338.7 193.4 341.8 190 342.5C186.6 343.2 164.2 346.4 162 346.8L140 347L140 240L288 240Z" fill="#ff1b00"/>
<path d="M1183 479.2C1184.4 477.1 1192.9 468.5 1195.5 466.8C1198.1 465 1212.5 458.4 1215.5 457.5C1218.5 456.6 1230.5 455.5 1233 455.5C1235.5 455.5 1245.2 456.6 1246.8 458C1248.2 459.4 1251.2 470.4 1251.8 473C1252.3 475.6 1253.9 487.7 1254.2 490.5C1254.6 493.3 1256.7 505.4 1256 508C1255.3 510.6 1247.5 521.3 1245.5 523C1243.5 524.7 1232.8 528.4 1230.5 529.2C1228.2 530.1 1219 533.2 1216.8 533.5C1214.5 533.8 1204 534.1 1201.8 533.5C1199.5 532.9 1190.8 526.8 1189.2 525.5C1187.8 524.2 1183.7 518 1183 516.8C1182.3 515.5 1180.4 511.1 1180 509.2C1179.6 507.4 1177.3 496.6 1177.5 494.2C1177.7 491.9 1181.6 481.4 1183 479.2Z" fill="#00ff6b"/>
<path d="M752 75C752.1 75.7 752.9 82 752.8 83.8C752.6 85.5 751.4 94.4 750.2 97.5C749.1 100.6 740.5 118.7 739 122.5C737.5 126.3 732.4 140.8 731.5 145C730.6 149.2 727.9 171 727.8 175C727.6 179 729.8 192.2 730.2 195C730.8 197.8 732.9 207.6 734 210C735.1 212.4 742.4 222.8 744 225C745.6 227.2 752.3 235.5 754 237.5C755.7 239.5 763.2 247.2 765.2 250C767.2 252.8 777.3 269.8 779 272.5C780.7 275.2 785 282.1 786.5 284C788 285.9 795.7 293.7 798 296C800.3 298.3 813.1 310.5 815.5 312.8C817.9 315 826.4 322.2 828 324C829.6 325.8 834.5 333.1 835.5 335.2C836.5 337.4 839.5 347.8 840.5 350.2C841.5 352.7 848.5 363.7 848 366C847.5 368.3 837 377.9 834.2 379.5C831.5 381.1 815.9 384.9 813 386C810.1 387.1 799.9 390.9 798 392.8C796.1 394.6 789.3 406.5 789 409C788.7 411.5 793.3 422.2 794 424C794.7 425.8 797.2 429.4 798 431.5C798.8 433.6 803.7 447.4 804.2 450.2C804.8 453.1 804.9 463.8 805 467C805.1 470.2 806.2 486.6 806 490.5C805.8 494.4 803.7 511.7 803 515.5C802.3 519.3 797.8 534.9 796.8 538C795.8 541.1 791.4 552.7 790.5 554.2C789.6 555.8 786.7 556.4 785.5 557.5C784.3 558.6 776.9 567.2 775 568.5C773.1 569.8 764.1 573.3 761.8 574.2C759.4 575.2 747.8 579.4 745.5 580.5C743.2 581.6 735.2 586.2 733 588C730.8 589.8 720.3 600.6 718 603C715.7 605.4 705.6 615.8 704 617.8C702.4 619.7 700 623.9 697.8 627C695.5 630.1 679.4 654.1 676.5 657C673.6 659.9 663.9 664.1 661.5 663.8C659.1 663.4 647.5 654.9 646 652C644.5 649.1 643.2 631.4 642.8 627C642.3 622.6 640.7 600.2 640.2 596.5C639.8 592.8 637.9 582.8 637 580.2C636.1 577.8 630.1 567.6 629 565.2C627.9 562.9 623.5 553.4 622.8 551C622 548.6 619.9 537.6 619.5 535.2C619.1 532.9 618.2 523.6 617.8 521.5C617.3 519.4 615 510.8 614 509C613 507.2 606.7 499.7 604.8 499C602.8 498.3 592.2 497.9 589.8 499.8C587.3 501.6 576.3 520.1 574 522.8C571.7 525.4 563.7 531.5 561.5 532.8C559.3 534 549.3 538.1 547 539C544.7 539.9 536.1 543 532.8 544C529.4 545 508.6 550.4 505.2 551C501.9 551.6 492.4 551.4 490.2 551C488.1 550.6 480.6 547.2 479 546.5C477.4 545.8 471.3 543.4 470 542.5C468.7 541.6 463.4 536.6 462.5 535C461.6 533.4 458.2 524.4 458.8 522.5C459.2 520.6 467.1 513.1 468.8 511.2C470.4 509.4 477.7 500.5 479 499C480.3 497.5 484.2 494.4 485.2 492.8C486.2 491.1 492 480.9 491.5 479C491 477.1 481.5 470.3 479 469C476.5 467.7 463.6 462.6 460 462.2C456.4 461.8 437.7 463.3 434.4 464.1C431.1 464.9 421.1 470.7 418.7 471.6C416.3 472.5 407.2 474.8 404.9 475.4C402.6 476 393.2 478.1 390.5 478.5C387.8 478.9 373.8 479.9 371.6 480.4C369.4 480.9 363.7 483.8 362.5 485C361.3 486.2 357.1 493.1 356.2 495C355.4 496.9 354.2 507.2 352.5 508.8C350.8 510.2 337.6 512.5 335 513.8C332.4 515 323.2 523 320 524.5C316.8 526 299 531.1 295 532.5C291 533.9 274 540.7 270 542.5C266 544.3 248.8 553.2 245 555C241.2 556.8 225.7 563.8 222.5 565C219.3 566.2 207.5 569.2 205 569.5C202.5 569.8 193.5 569.2 191.2 568.8C189 568.3 179.3 564.5 177 563.8C174.7 563 163.2 559.8 162 559.5L140 560L140 850L704.8 850L704.8 835C704.8 834 704.7 824.2 705.2 822C705.8 819.8 709.5 810.5 711.5 807C713.5 803.5 728.1 781.6 730.2 778.2C732.4 774.9 736.4 766.7 737.8 764.5C739.1 762.3 745.6 755.1 747.8 750.8C749.9 746.4 762.2 714.8 764 709.5C765.8 704.2 769.6 690 770.2 684.5C770.9 679 771.3 645.5 771.8 640.5C772.2 635.5 774.5 624.6 776 621.8C777.5 618.9 787.7 606.4 790 604.8C792.3 603.1 802 601.4 804.2 601C806.5 600.6 815.3 599.8 818 599.8C820.7 599.7 834.8 600.6 838 600.5C841.2 600.4 854.4 599 858 598.8C861.6 598.5 878.2 597.5 883 597.5C887.8 597.5 912.9 598.4 918 598.5C923.1 598.6 943.2 598.9 946.8 598.8C950.2 598.6 959.5 597.5 961.8 596.8C964 596 972.1 591.7 974.2 590C976.4 588.3 985.6 577.9 988 575.5C990.4 573.1 1002 560.8 1004.2 560C1006.5 559.2 1013.3 564.8 1015.5 565.5C1017.7 566.2 1030 568.5 1031.8 569.2C1033.5 570 1036.9 574.4 1038 575.5C1039.1 576.6 1043.6 582.9 1045.5 582.5C1047.4 582.1 1059.3 574.9 1061.8 570.5C1064.2 566.1 1073.4 533.4 1075.5 528C1077.6 522.6 1086.1 507 1088 503C1089.9 499 1098 481.1 1099.2 478C1100.5 474.9 1102.3 466.3 1103 464C1103.7 461.7 1107.1 451.2 1108 449C1108.9 446.8 1113.3 438.6 1114.2 436.5C1115.2 434.4 1118.7 425.1 1119.2 422.8C1119.8 420.4 1121.8 410.1 1121.8 407.8C1121.7 405.4 1119.4 396.2 1118 394C1116.6 391.8 1106.5 382.1 1104.2 380.2C1102 378.4 1092.8 372.7 1090.5 371.5C1088.2 370.3 1078.3 366.9 1075.5 365.2C1072.7 363.6 1057.9 353.8 1055.5 351.5C1053.1 349.2 1046.7 338.7 1045.5 336.5C1044.3 334.3 1041.1 326.2 1040.5 324C1039.9 321.8 1037.7 311.3 1038 309C1038.3 306.7 1042.7 297.1 1044.2 295.2C1045.8 293.4 1055.6 286.8 1058 285.2C1060.4 283.8 1071.8 277.4 1074.2 276.5C1076.7 275.6 1085.7 274.6 1088 274.5C1090.3 274.4 1100.6 274.9 1103 275.2C1105.4 275.6 1115.6 278.8 1118 279.5C1120.4 280.2 1130.4 283.9 1133 284.5C1135.6 285.1 1147.9 286.4 1150.5 286.5C1153.1 286.6 1163 286.4 1165.5 286C1168 285.6 1179.3 282.9 1181.8 282C1184.2 281.1 1193.3 275.9 1195.5 275C1197.7 274.1 1206.7 271.6 1209.2 270.5C1211.8 269.4 1225.1 263.3 1228 261.2C1230.9 259.2 1242.7 248.1 1245.5 245C1248.3 241.9 1261.6 223.8 1263 222L1290 222L1290 60L752 60Z" fill="#00ffd7"/>
<path d="M789 75C789 77.4 788.8 100.1 788.5 105C788.2 109.9 786.1 132.6 785.2 136.2C784.4 139.9 779 149.1 777.8 151.2C776.5 153.4 770.3 162.1 769 163.8C767.7 165.4 762.3 171 761.5 172.5C760.7 174 759.1 180.7 759 182.5C758.9 184.3 759.5 193 760.2 195C761 197 766 205.7 767.8 207.5C769.5 209.3 780.3 216.1 782.8 217.5C785.2 218.9 795.2 223.4 798 225C800.8 226.6 814 234.9 818 237.5C822 240.1 843.6 254.7 848 257.5C852.4 260.3 869.8 270.6 873 272.5C876.2 274.4 885.4 279.8 888 281.5C890.6 283.2 903.1 292.2 905.5 294C907.9 295.8 915.9 302.5 918 303.5C920.1 304.5 929.5 306.6 931.8 306C934 305.4 943.2 297.9 945.5 296.5C947.8 295.1 956.3 290.7 960.5 289C964.7 287.3 992.2 277.7 998 275.2C1003.8 272.8 1028.2 261.2 1033 258.8C1037.8 256.3 1054.6 246.8 1058 245C1061.4 243.2 1072.9 237.3 1075.5 236.2C1078.1 235.2 1088.3 232.5 1090.5 232C1092.7 231.5 1100.8 230.5 1103 230.5C1105.2 230.5 1115.6 231.5 1118 232C1120.4 232.5 1129.8 235.1 1133 236.2C1136.2 237.4 1154.6 245.8 1158 247C1161.4 248.2 1173 250.8 1175.5 251.2C1178 251.7 1186.8 253.2 1189.2 253C1191.7 252.8 1203.4 249.4 1205.5 248.8C1207.6 248.1 1213.6 245.4 1215.5 244.5C1217.4 243.6 1227.2 238.5 1229.2 237C1231.2 235.5 1238.7 228.1 1240.5 226.2C1242.3 224.4 1250.6 215 1251.5 214L1290 180L1290 60L789 60Z" fill="#00f2ff"/>
<path d="M162 586.2C163.8 586.6 181.6 590.7 185 591.2C188.4 591.8 201.8 593.3 205 593C208.2 592.7 221.8 588.7 225 587.5C228.2 586.3 242 579 245 577.5C248 576 260 569.8 262.5 568.8C265 567.8 274.1 565.9 276.2 565C278.4 564.1 286.9 559.2 290 557.5C293.1 555.8 311.6 545.5 315 543.8C318.4 542 329.9 536.4 332.5 535.5C335.1 534.6 344.9 533.1 347.5 533C350.1 532.9 362.5 534 365 534.5C367.5 535 377.1 538.1 378.8 538.8C380.4 539.4 384.8 541.6 386.2 542.5C387.8 543.4 395.8 548.9 397.5 550.5C399.2 552.1 405.6 560.2 407.5 562.5C409.4 564.8 418.1 577.1 421.2 579.5C424.4 581.9 442.9 590 447.5 592.5C452.1 595 475.5 608.1 479 610.5C482.5 612.9 490.2 620.7 491.5 622.8C492.8 624.8 495.6 633.2 495.2 636.5C494.9 639.8 487.8 659.5 486.5 664.5C485.2 669.5 479.9 695.9 479 699.5C478.1 703.1 476 707.5 475.5 709.5C475 711.5 473.3 722.5 473 725C472.7 727.5 471.6 738.2 471.2 740.8C470.9 743.3 469.8 754 468.8 757C467.8 760 459.1 775.9 458.8 778.2C458.4 780.6 464.1 785.3 465 787C465.9 788.7 469.4 797.1 470 799.5C470.6 801.9 471.8 814.2 472.5 817C473.2 819.8 478.5 833.6 479 835L479 850L140 850L140 586Z" fill="#00f2ff"/>
<path d="M536 835C536.9 833.6 544.7 819.9 547.8 817.5C550.8 815.1 570 807 574 805C578 803 595.1 793.8 597.8 792C600.4 790.2 605.7 783.8 606.5 782C607.3 780.2 608 773.2 607.8 769.5C607.5 765.8 602.5 739.6 603.2 735.8C604 731.9 615.2 721.5 617.8 720.8C620.3 720 632.8 725.3 635.2 726.5C637.7 727.7 646.8 733.9 648.5 735.8C650.2 737.6 656 747.2 657 749.5C658 751.8 661 761.5 661 764.5C661 767.5 657.5 783.6 657 787C656.5 790.4 654.2 803.2 654.5 807C654.8 810.8 660.5 832.8 661 835L661 850L536 850Z" fill="#00f2ff"/>
<path d="M1000.5 473C999.1 471.5 989.9 462.6 988 460.2C986.1 457.9 978.4 445.9 976.8 444C975.1 442.1 968.5 438.2 968 436.5C967.5 434.8 968.9 425 970.5 422.8C972.1 420.5 985 410.6 988 408.5C991 406.4 1004.5 398.5 1008 397C1011.5 395.5 1028.8 390.2 1031.8 389.8C1034.7 389.3 1042 390.3 1044.2 391C1046.5 391.7 1058.3 397.6 1060.5 399C1062.7 400.4 1070.3 407.4 1071.8 409C1073.2 410.6 1077.1 416.8 1078 419C1078.9 421.2 1082.2 432.6 1082.5 436.5C1082.8 440.4 1082.1 463.9 1081.8 468C1081.4 472.1 1079.1 485.2 1078 488C1076.9 490.8 1069.8 500 1068 503C1066.2 506 1057.4 521.6 1055.5 525.5C1053.6 529.4 1045.7 549.2 1044.2 551.8C1042.8 554.3 1039.3 557.6 1038 557.5C1036.7 557.4 1028.4 552.1 1027.5 550.5C1026.6 548.9 1026.8 540.3 1026.8 538C1026.7 535.7 1027.5 524.1 1026.8 521.8C1026 519.4 1019.2 509.9 1018 508C1016.8 506.1 1012.8 500.3 1011.8 498C1010.8 495.7 1006.4 481.2 1005.5 479.2C1004.6 477.2 1001.9 474.5 1000.5 473Z" fill="#00f2ff"/>
<path d="M810.5 75C810.4 76.6 809.1 91 809.2 95C809.4 99 811 119.8 811.8 125C812.5 130.2 818 154.5 819.2 160C820.5 165.5 824.9 189.7 826.8 193.8C828.6 197.8 839.5 208.4 843 211.2C846.5 214.1 866.5 226.4 870.5 228.8C874.5 231.1 890.3 238.8 893 240C895.7 241.2 902.2 243.4 904.2 243.8C906.2 244.1 915.7 244.5 918 244.5C920.3 244.5 927.8 243.9 933 243.8C938.2 243.6 977.4 243.3 983 243C988.6 242.7 999.2 240.9 1003 240C1006.8 239.1 1026.5 233.1 1030.5 231.2C1034.5 229.4 1049.4 219.7 1053 217.5C1056.6 215.3 1072.7 205.2 1075.5 203.8C1078.3 202.3 1085.8 200.3 1088 200C1090.2 199.7 1100.4 199.2 1103 199.5C1105.6 199.8 1117.3 202.9 1120.5 203.8C1123.7 204.6 1139.8 209.3 1143 210C1146.2 210.7 1157.9 212.7 1160.5 213C1163.1 213.3 1173.2 213.7 1175.5 213.8C1177.8 213.8 1187 213.3 1189.2 213.2C1191.5 213.2 1200.8 212.9 1203 212.5C1205.2 212.1 1214.8 209.4 1216.8 208.8C1218.8 208.1 1226.4 204.7 1228 203.8C1229.6 202.8 1236.3 197.5 1237 197L1290 170L1290 60L810 60Z" fill="#00bcff"/>
<path d="M162 608.8C163.2 609 175.2 612 177.5 612.5C179.8 613 188.9 614.1 191.2 614.5C193.6 614.9 203.9 616.9 206.2 617C208.6 617.1 217.7 615.9 220 615.5C222.3 615.1 232.6 613.4 235 612.5C237.4 611.6 247.7 605.1 250 603.8C252.3 602.4 261.6 596.3 263.8 595C265.9 593.7 274.1 588.9 276.2 588C278.4 587.1 287.3 585 290 583.8C292.7 582.5 306.6 574.3 310 572.5C313.4 570.7 329.5 562.4 332.5 561.2C335.5 560.1 345.1 558.1 347.5 558C349.9 557.9 360.5 559.7 362.5 560.5C364.5 561.3 371.1 565.9 372.5 567.5C373.9 569.1 378.9 577.4 380 580C381.1 582.6 385.6 596.8 386.2 600C386.9 603.2 388.4 616.8 388.8 620C389.1 623.2 390.1 637.4 391.2 640C392.4 642.6 401.8 650.5 403.8 652.5C405.8 654.5 414.9 663 416.2 665C417.6 667 420.6 675.1 421.2 677.5C421.9 679.9 423.8 690.9 423.8 694.5C423.8 698.1 421.4 718.6 421.2 722C421.1 725.4 422 734.8 422.5 737C423 739.2 426.6 747.6 427 750C427.4 752.4 427.2 763.8 427 767C426.8 770.2 424.6 785.9 424.5 789.5C424.4 793.1 425.1 809.2 425.5 812C425.9 814.8 429.3 822.7 430 824.5C430.7 826.3 433.4 834.2 433.8 835L433 850L140 850L140 608Z" fill="#00bcff"/>
<path d="M1031.8 435.2C1032.2 434.1 1044.8 433 1045.5 433.2C1046.2 433.5 1053.8 443.4 1054.2 444C1054.7 444.6 1058.4 450.8 1058.5 451.5C1058.6 452.2 1058.9 464.1 1058.5 465C1058.1 465.9 1046.8 478.4 1046 478.5C1045.2 478.6 1033.5 468.2 1033 466.8C1032.5 465.3 1031.3 436.4 1031.8 435.2Z" fill="#00bcff"/>
<path d="M848 75C847.3 75.8 840.2 83.2 839.2 85C838.2 86.8 835.7 94.7 835.5 97.5C835.3 100.3 836 116 836.8 120C837.5 124 843 143.5 844.2 147.5C845.5 151.5 850.4 166.9 851.8 170C853.1 173.1 859.6 183.9 861.8 186.2C863.9 188.6 874.7 196.8 878 198.8C881.3 200.7 898.8 209.3 903 210C907.2 210.7 927.1 207.9 930.5 207.5C933.9 207.1 943.5 205.7 946 205.5C948.5 205.3 958.6 205.4 961.8 205.5C964.9 205.6 982 206.9 985.5 207C989 207.1 1002.9 206.9 1005.5 206.8C1008.1 206.6 1015.8 205.6 1018 205C1020.2 204.4 1029.8 200.9 1033 198.8C1036.2 196.6 1053.6 181.2 1058 177.5C1062.4 173.8 1084.4 155.4 1088 153C1091.6 150.6 1100.1 147.3 1102.5 147.5C1104.9 147.7 1115.6 153.9 1118 155.5C1120.4 157.1 1130.8 166 1133 167.5C1135.2 169 1143.3 173.7 1145.5 174.5C1147.7 175.3 1158.2 176.9 1160.5 177C1162.8 177.1 1172 176.4 1174.2 176.2C1176.5 176.1 1186.1 175.2 1188.5 175C1190.9 174.8 1201.3 174.5 1204.2 174.2C1207.2 174 1223.3 171.7 1225 171.5L1290 165L1290 60L848 60Z" fill="#0086ff"/>
<path d="M162 633C163.8 633.4 181.2 636.8 185 637.5C188.8 638.2 206.2 640.9 210 641.2C213.8 641.6 229.5 642.7 232.5 642.5C235.5 642.3 245 639.6 247.5 638.8C250 637.9 261.1 633.5 263.8 632C266.4 630.5 277.1 622 280 620C282.9 618 296.8 609.2 300 607.5C303.2 605.8 317.4 599.9 320 598.8C322.6 597.6 330.3 593.8 332.5 593.8C334.7 593.7 345.8 596.7 347.5 598C349.2 599.3 353.1 608 353.8 610C354.4 612 355.6 620.1 355.5 622.5C355.4 624.9 352.8 637.4 352.5 640C352.2 642.6 351.8 652.8 352 655C352.2 657.2 354.2 665.8 355 668C355.8 670.2 361.1 679.5 362.5 682C363.9 684.5 371.2 696.8 372.5 699.5C373.8 702.2 377.9 713.4 378.8 715.8C379.6 718.1 382.3 727.3 383 729.5C383.7 731.7 387.2 740.6 388 743.2C388.8 745.9 392 757.7 392.5 762C393 766.3 393.6 791.2 393.8 797C393.9 802.8 394.4 832 394.5 835L394 850L140 850L140 633Z" fill="#0086ff"/>
<path d="M893 75C892.6 75.6 889.4 81 888.5 82.5C887.6 84 882.7 91.8 881.8 93.8C880.8 95.8 877.4 105 876.8 107.5C876.1 110 874.2 122 874.2 125C874.3 128 876.7 142.1 877.5 145C878.3 147.9 883.1 159.2 884.2 161.2C885.4 163.2 890.2 168.9 891.8 170C893.2 171.1 900.9 174.5 903 175C905.1 175.5 914.6 176.8 918 176.8C921.4 176.7 942.1 174.1 945.5 173.8C948.9 173.4 958.1 172.5 960.5 172.5C962.9 172.5 972 173.4 975.5 173.8C979 174.1 1000.9 176.7 1004.2 176.8C1007.6 176.8 1015.5 175.4 1018 174.5C1020.5 173.6 1032.5 167.2 1035.5 165C1038.5 162.8 1052.6 150.7 1055.5 147.5C1058.4 144.3 1070 128.2 1071.8 125C1073.5 121.8 1076 111.5 1076.8 107.5C1077.5 103.5 1080.7 77.6 1081 75L1081 60L893 60Z" fill="#0051ff"/>
<path d="M1159.2 75C1159.2 76.2 1158.7 87.4 1158.8 90C1158.8 92.6 1159.4 104.9 1160 107.5C1160.6 110.1 1164.9 120.6 1166.8 122.5C1168.6 124.4 1180.1 130.1 1183 131.2C1185.9 132.4 1200.1 136.6 1203 137C1205.9 137.4 1217.7 136.3 1219 136.2L1290 136L1290 60L1159 60Z" fill="#0051ff"/>
<path d="M162 657.5C163.8 657.8 215.1 667.2 217.5 667.5C219.9 667.8 232.7 667.6 233.8 667.5C234.8 667.4 246.6 666 248.8 665.8C250.9 665.5 295.1 658.9 297 658.8C298.9 658.6 304.2 661.4 305 662C305.8 662.6 319.1 675.8 320 677C320.9 678.2 331.8 695.7 332.5 697C333.2 698.3 341.5 714.6 342 715.8C342.5 716.9 347.6 729 348 730C348.4 731 352.3 744.4 352.5 745.8C352.7 747.1 354.7 770.2 355 772C355.3 773.8 360.9 797.4 361.2 799.5C361.6 801.6 366.1 833.8 366.2 835L366 850L140 850L140 657Z" fill="#0051ff"/>
<path d="M969.2 107.5C968.9 105.9 968.5 97 969.2 95C970 93 977.8 83.9 979.2 82.5C980.8 81.1 985.9 78.7 988 78C990.1 77.3 1002.6 74.3 1005.5 74C1008.4 73.7 1022 73.6 1024.2 74C1026.5 74.4 1031.8 77.5 1033 78.8C1034.2 80 1038.6 88.1 1039.2 90C1039.9 91.9 1041 100.3 1041 102.5C1041 104.7 1039.8 115.5 1039.2 117.5C1038.7 119.5 1036 126.5 1034.2 128C1032.5 129.5 1020.4 135.2 1018 135.8C1015.6 136.3 1007 135.9 1004.2 135C1001.5 134.1 985.4 126.6 983 125C980.6 123.4 975.4 116.4 974.2 115C973.1 113.6 969.6 109.1 969.2 107.5Z" fill="#001bff"/>
<path d="M162 691.5C164.2 692 185.8 697.2 190 698.2C194.2 699.3 210.8 703.7 215 704.5C219.2 705.3 239.4 707.5 242.5 708.2C245.6 709 252 712.3 253.8 713.2C255.5 714.2 263.4 718.1 264.5 720C265.6 721.9 266.8 734.6 267 737C267.2 739.4 267.4 747.8 267.5 750C267.6 752.2 268.2 762.2 268.8 764.5C269.2 766.8 272.1 776 273.8 778.2C275.4 780.5 287.3 790.6 290 793.2C292.7 795.9 305.2 808.2 307.5 810.8C309.8 813.2 317.3 822.6 318.8 824.5C320.2 826.4 325 834.2 325.5 835L325 850L140 850L140 691Z" fill="#001bff"/>
<g mask="url(#lblmask)" fill="none" stroke="#000" stroke-linejoin="round">
<path stroke-width="1.15" d="M288 265.5C287.8 266.1 285.7 271.2 285 272.5C284.3 273.8 280.1 279.6 278.8 281.2C277.4 282.9 270.6 292 268.8 293.8C266.9 295.5 258.4 301.5 256.2 303C254.2 304.5 245.2 311 242.5 313C239.8 315 225.5 325.5 222.5 327.5C219.5 329.5 207.6 336.3 205 337.5C202.4 338.7 193.4 341.8 190 342.5C186.6 343.2 164.2 346.4 162 346.8M353 265.5C352.8 266.5 350.7 275.2 350 277.5C349.3 279.8 345.8 291.4 344.5 293.8C343.2 296.1 335.3 305.8 333.8 307.5C332.2 309.2 328 312.6 325 315C322 317.4 299.9 334.3 296.2 337.5C292.6 340.7 282.6 351.9 280 355C277.4 358.1 266.4 373.9 263.8 376.2C261.1 378.6 250.6 383.3 246.2 384.5C241.9 385.7 216.7 390.4 210 391.2C203.3 392.1 165.8 394.7 162 395M450 251.2C449.9 253.2 449.4 273.1 449.2 276.2C449.1 279.4 448.2 289.1 447.5 291.2C446.8 293.4 441 302.3 440 303.8C439 305.2 437.8 309 435 309.5C432.2 310 408.5 309.1 405 309.5C401.5 309.9 392.9 313.4 391.2 314.5C389.6 315.6 386.2 321.2 383.8 323C381.2 324.8 363.1 335.5 360 337C356.9 338.5 347 341.5 345 342C343 342.5 337 342.5 335 343C333 343.5 322.4 347.4 320 348.8C317.6 350.1 307.4 357.6 305 360C302.6 362.4 292.4 376.4 290 378.8C287.6 381.1 277.7 387.4 275 388.8C272.3 390.1 258.9 395.4 256.2 396.2C253.7 397.1 244.8 399 242.5 399.5C240.2 400 232.1 402.2 227.5 403C222.9 403.8 190.2 409.2 185 410C179.8 410.8 163.8 413.2 162 413.5M529 198.8C529.7 199.7 536.5 208.1 537.8 210C539 211.9 543.8 220.3 544.5 222.5C545.2 224.7 546.9 235.1 547 237.5C547.1 239.9 545.6 250.1 545.2 252.5C544.9 254.9 543.2 265 542.8 267.5C542.2 270 539.5 281.9 539 284C538.5 286.1 537 292.5 536.5 294C536 295.5 534.4 300.8 532.8 302.8C531.1 304.8 519.2 316.2 516.5 319C513.8 321.8 501.2 335.2 499 337.8C496.8 340.2 490.6 348.3 489 350.2C487.4 352.2 480.5 360.7 479 362C477.5 363.3 472.3 365.3 470 366.2C467.7 367.2 454 372.9 450 373.8C446 374.6 424.4 376.8 420 377.5C415.6 378.2 398.4 381.5 395 382.5C391.6 383.5 380.3 388.8 377.5 390C374.7 391.2 363.4 396 360 397C356.6 398 338.2 401.4 335 402C331.8 402.6 322.8 404.4 320 405C317.2 405.6 303.8 409 300 410C296.2 411 277.4 415.9 273 417C268.6 418.1 248.8 422.6 245.4 423.2C242 423.8 233.3 424.5 231 425C228.7 425.5 219.4 428.2 216.5 428.9C213.6 429.6 198.2 432.7 195 433.5C191.8 434.3 178.4 438.3 177 438.7M554.8 158.8C554.8 160.1 555.1 173.2 555.2 175C555.4 176.8 556.6 179.7 557 181.2C557.4 182.8 559.8 192.2 560.2 194.5C560.7 196.8 562.4 206.8 562.8 210C563.1 213.2 565 231 565.2 235C565.5 239 565.4 256.1 565.2 260C565.1 263.9 563.5 280.9 563 284C562.5 287.1 559.7 296.7 559 299C558.3 301.3 555 310.8 554 312.8C553 314.8 547.8 322.2 546.5 324C545.2 325.8 539.8 332.9 537.8 335.2C535.8 337.6 524.6 351.1 521.5 354C518.4 356.9 502.4 369.3 499 371.5C495.6 373.7 481.3 380.4 479 381.5C476.7 382.6 472.5 385.1 470 385.8C467.5 386.4 451.5 388.8 447.5 389.5C443.5 390.2 424.2 393.3 420 394.5C415.8 395.7 399.1 402.8 395.5 404.4C391.9 406 380.5 413.3 375.4 414.5C370.3 415.7 337.4 419.3 331.4 420C325.4 420.7 304.7 423.1 300 423.6C295.3 424.1 278.3 425.3 273 425.7C267.7 426.1 238.1 427.4 234.1 428.2C230.1 429 224.8 434.8 222.8 435.8C220.8 436.8 211.2 439.6 209 440.2C206.8 440.8 197.8 442 195.2 442.7C192.6 443.4 178.5 448.1 177 448.6M625.2 75C625.9 77 631.9 96.2 632.8 100C633.6 103.8 636.2 119.5 636.5 122.5C636.8 125.5 636.9 135.1 636.5 137.5C636.1 139.9 634.1 148.7 631.5 152.5C628.9 156.3 606.5 181.6 604 185C601.5 188.4 600.7 193 600.2 195C599.8 197 598.5 207.1 598.5 209.5C598.5 211.9 600 221.4 600.2 225C600.5 228.6 601.7 250.3 601.5 255C601.3 259.7 598.2 280.1 597.8 284C597.2 287.9 596 300.4 595.2 304C594.5 307.6 590.3 325.2 589 329C587.7 332.8 581 348.3 579 351.5C577 354.7 566.6 366.8 564 369C561.4 371.2 550.3 377 546.5 379C542.7 381 520.7 392 516.5 394C512.3 396 497 402.8 494 404C491 405.2 481.7 408.2 479 409C476.3 409.8 463.7 412.9 460 413.8C456.3 414.7 437.4 419.4 433.2 420.8C429 422.2 411.2 430.2 408 431.4C404.8 432.6 395.8 434.7 393.6 435.2C391.4 435.7 383.8 437.2 380 437.7C376.2 438.2 350.2 440.9 346.5 440.9C342.8 440.9 335.7 438.8 334 438C332.3 437.2 327.3 431.9 325 431.4C322.7 430.9 307.7 431.8 305 432C302.3 432.2 293 433.1 290.7 433.3C288.4 433.5 279.8 434.3 276.8 434.5C273.8 434.7 256.3 435.8 253 436.4C249.7 437 239.8 439.2 235.4 441.4C231 443.6 203.6 460.6 197.7 464C191.8 467.4 164.9 482.5 162 484.1M1274 371.5C1273.5 371.9 1261.1 382 1260.5 382.8C1259.9 383.5 1255.2 391.9 1255 392.8C1254.8 393.6 1255.9 407.2 1256 407.8C1256.1 408.3 1258.7 409.3 1259.2 409C1259.8 408.7 1273.5 398.1 1274 397.8M647 75C647.2 75.6 648.5 81.1 649 82.5C649.5 83.9 652 89.5 652.8 92.5C653.5 95.5 658.3 116 659 120C659.7 124 661.5 139.1 661.5 142.5C661.5 145.9 660.1 159.3 659.5 162.5C658.9 165.7 655.2 178.7 654 182.5C652.8 186.3 645 205.8 644 210C643 214.2 642.3 231.6 642 235C641.7 238.4 640.9 249.9 640.2 252.5C639.6 255.1 635.4 265 634 267.5C632.6 270 624.4 281.5 622.8 284C621.1 286.5 615.5 296.2 614 299C612.5 301.8 605.2 315.9 604 319C602.8 322.1 600.2 334.8 599 337.8C597.8 340.8 590.6 353.9 589 356.5C587.4 359.1 581.6 367.9 579 370.2C576.4 372.6 560.5 384 556.5 386.5C552.5 389 533.2 399.4 529 401.5C524.8 403.6 507.2 411.4 504 412.8C500.8 414.1 491.2 418.3 489 419C486.8 419.7 478.3 420.6 476 421C473.7 421.4 463 424 460 424.5C457 425 440.4 426 438.2 427C436 428 434.5 436 433 437C431.5 438 422.9 438.7 419.3 439C415.7 439.3 391.5 440.7 388 440.9C384.5 441.1 377.4 441.4 375.4 441.5C373.4 441.6 365.3 442.5 362.8 442.7C360.3 442.9 346.3 443.8 344 443.4C341.7 443 335.8 438.7 334 438C332.2 437.3 324.9 435.2 322 435.2C319.1 435.2 301.2 437.3 298.2 437.9C295.2 438.5 286.6 442.5 284.4 443.3C282.2 444.1 273.5 447.3 270.6 448.3C267.7 449.3 252.8 453.7 248 455.9C243.2 458.1 217.2 472 210.3 475.4C203.4 478.8 165.9 497.1 162 499M1274 296C1273.1 297 1264.2 307 1262.5 309C1260.8 311 1255.4 318.9 1253 321.5C1250.6 324.1 1236 338.3 1233 341.5C1230 344.7 1217.8 358.5 1215.5 361.5C1213.2 364.5 1205.5 376.2 1204.2 379C1203 381.8 1199.8 394.1 1199.2 396.5C1198.8 398.9 1198.3 406.9 1198 409C1197.7 411.1 1195.2 420.6 1195.5 422.8C1195.8 424.9 1200.3 435.1 1201.8 436.5C1203.2 437.9 1210.7 440.2 1213 439.8C1215.3 439.3 1227.8 432.4 1230.5 431C1233.2 429.6 1244.3 422.9 1246.8 422.8C1249.2 422.6 1258.3 428.4 1260.5 428.5C1262.7 428.6 1272.9 424.4 1274 424M1075 690C1073.7 690.5 1061.4 694.4 1059.2 695.8C1057.1 697.1 1049.6 705.5 1048 707.5C1046.4 709.5 1040.7 718.2 1039.2 720.8C1037.8 723.3 1032 735.8 1030.5 739.5C1029 743.2 1022 762.7 1020.5 767C1019 771.3 1012.8 789.2 1011.8 793.2C1010.8 797.2 1008.5 813.7 1008 817C1007.5 820.3 1005.2 833.6 1005 835M1174.2 426C1175.2 425.2 1184 441.2 1184.2 442C1184.5 442.8 1182.1 449.7 1181.8 450.2C1181.4 450.8 1174.9 457.9 1174.2 458.5C1173.6 459.1 1162.3 467.5 1161.8 467.8C1161.2 468 1156.3 466.6 1156.8 465.2C1157.2 463.9 1173.3 426.8 1174.2 426ZM1145.5 484.2C1145.8 484.2 1149 492.2 1149.2 493C1149.5 493.8 1151.8 507 1151.8 508C1151.8 509 1149.4 522.3 1149.2 523C1149.1 523.7 1146.3 528.5 1146 528.5C1145.7 528.5 1140.8 525 1140.5 524.2C1140.2 523.5 1138.5 506.5 1138.5 505.5C1138.5 504.5 1141.5 493.7 1141.8 493C1142 492.3 1145.2 484.2 1145.5 484.2ZM694 75C694.5 77.4 699.5 100 700.2 105C701 110 703.6 131.9 704 137.5C704.4 143.1 705 169.4 705.2 175C705.5 180.6 706.2 203.5 706.5 207.5C706.8 211.5 708.4 222.5 709 225C709.6 227.5 713.2 236.4 714 238.8C714.8 241.1 718.5 250.1 719 253.8C719.5 257.4 720.1 280.4 720.2 284C720.4 287.6 720.5 296.4 721 299C721.5 301.6 725.5 313.5 726.5 316.5C727.5 319.5 733.2 333.7 734 336.5C734.8 339.3 736.3 349.2 736 351.5C735.7 353.8 731.6 363.6 730.2 365.2C728.9 366.9 722.2 371.4 719 372.8C715.8 374.1 693.1 380.5 690.2 382C687.4 383.5 683.8 389.4 682.8 391.5C681.8 393.6 679.2 405.1 677.8 407.8C676.2 410.4 666.5 422.1 664 424C661.5 425.9 649.1 430.6 646.5 431C643.9 431.4 633.7 429.9 631.5 429C629.3 428.1 620.7 421.6 618.5 420.2C616.3 418.9 607 412.9 604 412.8C601 412.6 585.5 416.6 581.5 417.8C577.5 418.9 558.2 426.5 554 427.8C549.8 429 533 432.9 529 433.5C525 434.1 508 434.6 504 434.8C500 434.9 482.5 435.7 479 435.8C475.5 435.8 462.5 435.7 460 435.8C457.5 435.9 449.9 436 447.6 437.1C445.3 438.2 435.7 447.7 431.3 449C426.9 450.3 396.7 452.6 392.3 453C387.9 453.4 378.4 454.1 376 454C373.6 453.9 365.1 451.7 362.8 451.5C360.5 451.3 350 450.2 347.7 450.9C345.4 451.6 336.2 459.1 333.9 460.3C331.6 461.5 321 464.4 318.8 466C316.6 467.6 307.6 478.2 306.3 480.4C305 482.6 304.2 491.6 303 494C301.8 496.4 293.3 507.8 291.2 510C289.2 512.2 279.2 521.2 277 522C274.8 522.8 266 519.9 263.8 520C261.5 520.1 251.2 523 248.8 523.8C246.3 524.5 235.8 528 233.8 528.8C231.7 529.5 224.8 533 222.5 533.8C220.2 534.5 208 537.9 205 538C202 538.1 187.8 535.9 185 535.5C182.2 535.1 171.8 533.1 170 533C168.2 532.9 162.6 533.7 162 533.8M1274 231.2C1273.3 232.2 1266.9 240.5 1265.5 242.5C1264.1 244.5 1258.4 254.2 1256.8 256.2C1255.1 258.4 1246.9 266.9 1245 268.8C1243.1 270.6 1236 277 1233 279C1230 281 1211.8 291.5 1208 294C1204.2 296.5 1189.3 306.8 1185.5 310.2C1181.7 313.8 1163.4 334.4 1160.5 337.8C1157.6 341.1 1150.2 349 1149.2 351.5C1148.3 354 1148.3 366.4 1148.5 369C1148.7 371.6 1151.4 381.6 1151.8 384C1152.1 386.4 1152.8 396.2 1152.5 399C1152.2 401.8 1149.1 415.9 1148 419C1146.9 422.1 1140.7 435.1 1139.2 437.8C1137.8 440.4 1131.9 449.4 1130.5 451.5C1129.1 453.6 1122.5 462.3 1121.8 464C1121 465.7 1120.8 471.9 1120.5 473C1120.2 474.1 1119 476.3 1118 478C1117 479.7 1109.6 491.9 1108 494.2C1106.4 496.6 1099.1 504.1 1098 506.8C1096.9 509.4 1094.8 524.6 1094.2 528C1093.7 531.4 1090.6 547.2 1090.5 549.2C1090.4 551.2 1093.6 550.9 1093 553C1092.4 555.1 1085.5 570.9 1083 575.5C1080.5 580.1 1064.8 606.9 1061.8 610.5C1058.8 614.1 1049.2 619.5 1045.5 621C1041.8 622.5 1018.9 628.2 1015.5 629.2C1012.1 630.3 1005.1 633.1 1003 634.2C1000.9 635.4 992.5 640.4 989.2 643.2C986 646.1 965.1 667 961.8 669.5C958.4 672 949.9 674.6 947.5 675C945.1 675.4 934 675.2 931.8 674.5C929.5 673.8 921.8 668.3 919.2 666.5C916.8 664.7 902.9 653.2 900.5 651.5C898.1 649.8 891.2 646.4 889.2 645.8C887.2 645.1 877.8 643.8 875.5 644C873.2 644.2 862.8 647 860.5 648.2C858.2 649.5 849.4 657 846.8 659.5C844.1 662 830.5 676.7 828 679.5C825.5 682.3 817.5 690.8 815.5 694C813.5 697.2 804.4 716.1 803 719.5C801.6 722.9 798.9 734.4 798 737C797.1 739.6 792.5 749.9 791.5 752C790.5 754.1 788.2 758.9 785.2 763.2C782.2 767.6 756.8 802.3 754 807C751.2 811.7 750.5 819.8 750.2 822C750 824.2 750.2 834 750.2 835M752 75C752.1 75.7 752.9 82 752.8 83.8C752.6 85.5 751.4 94.4 750.2 97.5C749.1 100.6 740.5 118.7 739 122.5C737.5 126.3 732.4 140.8 731.5 145C730.6 149.2 727.9 171 727.8 175C727.6 179 729.8 192.2 730.2 195C730.8 197.8 732.9 207.6 734 210C735.1 212.4 742.4 222.8 744 225C745.6 227.2 752.3 235.5 754 237.5C755.7 239.5 763.2 247.2 765.2 250C767.2 252.8 777.3 269.8 779 272.5C780.7 275.2 785 282.1 786.5 284C788 285.9 795.7 293.7 798 296C800.3 298.3 813.1 310.5 815.5 312.8C817.9 315 826.4 322.2 828 324C829.6 325.8 834.5 333.1 835.5 335.2C836.5 337.4 839.5 347.8 840.5 350.2C841.5 352.7 848.5 363.7 848 366C847.5 368.3 837 377.9 834.2 379.5C831.5 381.1 815.9 384.9 813 386C810.1 387.1 799.9 390.9 798 392.8C796.1 394.6 789.3 406.5 789 409C788.7 411.5 793.3 422.2 794 424C794.7 425.8 797.2 429.4 798 431.5C798.8 433.6 803.7 447.4 804.2 450.2C804.8 453.1 804.9 463.8 805 467C805.1 470.2 806.2 486.6 806 490.5C805.8 494.4 803.7 511.7 803 515.5C802.3 519.3 797.8 534.9 796.8 538C795.8 541.1 791.4 552.7 790.5 554.2C789.6 555.8 786.7 556.4 785.5 557.5C784.3 558.6 776.9 567.2 775 568.5C773.1 569.8 764.1 573.3 761.8 574.2C759.4 575.2 747.8 579.4 745.5 580.5C743.2 581.6 735.2 586.2 733 588C730.8 589.8 720.3 600.6 718 603C715.7 605.4 705.6 615.8 704 617.8C702.4 619.7 700 623.9 697.8 627C695.5 630.1 679.4 654.1 676.5 657C673.6 659.9 663.9 664.1 661.5 663.8C659.1 663.4 647.5 654.9 646 652C644.5 649.1 643.2 631.4 642.8 627C642.3 622.6 640.7 600.2 640.2 596.5C639.8 592.8 637.9 582.8 637 580.2C636.1 577.8 630.1 567.6 629 565.2C627.9 562.9 623.5 553.4 622.8 551C622 548.6 619.9 537.6 619.5 535.2C619.1 532.9 618.2 523.6 617.8 521.5C617.3 519.4 615 510.8 614 509C613 507.2 606.7 499.7 604.8 499C602.8 498.3 592.2 497.9 589.8 499.8C587.3 501.6 576.3 520.1 574 522.8C571.7 525.4 563.7 531.5 561.5 532.8C559.3 534 549.3 538.1 547 539C544.7 539.9 536.1 543 532.8 544C529.4 545 508.6 550.4 505.2 551C501.9 551.6 492.4 551.4 490.2 551C488.1 550.6 480.6 547.2 479 546.5C477.4 545.8 471.3 543.4 470 542.5C468.7 541.6 463.4 536.6 462.5 535C461.6 533.4 458.2 524.4 458.8 522.5C459.2 520.6 467.1 513.1 468.8 511.2C470.4 509.4 477.7 500.5 479 499C480.3 497.5 484.2 494.4 485.2 492.8C486.2 491.1 492 480.9 491.5 479C491 477.1 481.5 470.3 479 469C476.5 467.7 463.6 462.6 460 462.2C456.4 461.8 437.7 463.3 434.4 464.1C431.1 464.9 421.1 470.7 418.7 471.6C416.3 472.5 407.2 474.8 404.9 475.4C402.6 476 393.2 478.1 390.5 478.5C387.8 478.9 373.8 479.9 371.6 480.4C369.4 480.9 363.7 483.8 362.5 485C361.3 486.2 357.1 493.1 356.2 495C355.4 496.9 354.2 507.2 352.5 508.8C350.8 510.2 337.6 512.5 335 513.8C332.4 515 323.2 523 320 524.5C316.8 526 299 531.1 295 532.5C291 533.9 274 540.7 270 542.5C266 544.3 248.8 553.2 245 555C241.2 556.8 225.7 563.8 222.5 565C219.3 566.2 207.5 569.2 205 569.5C202.5 569.8 193.5 569.2 191.2 568.8C189 568.3 179.3 564.5 177 563.8C174.7 563 163.2 559.8 162 559.5M704.8 835C704.8 834 704.7 824.2 705.2 822C705.8 819.8 709.5 810.5 711.5 807C713.5 803.5 728.1 781.6 730.2 778.2C732.4 774.9 736.4 766.7 737.8 764.5C739.1 762.3 745.6 755.1 747.8 750.8C749.9 746.4 762.2 714.8 764 709.5C765.8 704.2 769.6 690 770.2 684.5C770.9 679 771.3 645.5 771.8 640.5C772.2 635.5 774.5 624.6 776 621.8C777.5 618.9 787.7 606.4 790 604.8C792.3 603.1 802 601.4 804.2 601C806.5 600.6 815.3 599.8 818 599.8C820.7 599.7 834.8 600.6 838 600.5C841.2 600.4 854.4 599 858 598.8C861.6 598.5 878.2 597.5 883 597.5C887.8 597.5 912.9 598.4 918 598.5C923.1 598.6 943.2 598.9 946.8 598.8C950.2 598.6 959.5 597.5 961.8 596.8C964 596 972.1 591.7 974.2 590C976.4 588.3 985.6 577.9 988 575.5C990.4 573.1 1002 560.8 1004.2 560C1006.5 559.2 1013.3 564.8 1015.5 565.5C1017.7 566.2 1030 568.5 1031.8 569.2C1033.5 570 1036.9 574.4 1038 575.5C1039.1 576.6 1043.6 582.9 1045.5 582.5C1047.4 582.1 1059.3 574.9 1061.8 570.5C1064.2 566.1 1073.4 533.4 1075.5 528C1077.6 522.6 1086.1 507 1088 503C1089.9 499 1098 481.1 1099.2 478C1100.5 474.9 1102.3 466.3 1103 464C1103.7 461.7 1107.1 451.2 1108 449C1108.9 446.8 1113.3 438.6 1114.2 436.5C1115.2 434.4 1118.7 425.1 1119.2 422.8C1119.8 420.4 1121.8 410.1 1121.8 407.8C1121.7 405.4 1119.4 396.2 1118 394C1116.6 391.8 1106.5 382.1 1104.2 380.2C1102 378.4 1092.8 372.7 1090.5 371.5C1088.2 370.3 1078.3 366.9 1075.5 365.2C1072.7 363.6 1057.9 353.8 1055.5 351.5C1053.1 349.2 1046.7 338.7 1045.5 336.5C1044.3 334.3 1041.1 326.2 1040.5 324C1039.9 321.8 1037.7 311.3 1038 309C1038.3 306.7 1042.7 297.1 1044.2 295.2C1045.8 293.4 1055.6 286.8 1058 285.2C1060.4 283.8 1071.8 277.4 1074.2 276.5C1076.7 275.6 1085.7 274.6 1088 274.5C1090.3 274.4 1100.6 274.9 1103 275.2C1105.4 275.6 1115.6 278.8 1118 279.5C1120.4 280.2 1130.4 283.9 1133 284.5C1135.6 285.1 1147.9 286.4 1150.5 286.5C1153.1 286.6 1163 286.4 1165.5 286C1168 285.6 1179.3 282.9 1181.8 282C1184.2 281.1 1193.3 275.9 1195.5 275C1197.7 274.1 1206.7 271.6 1209.2 270.5C1211.8 269.4 1225.1 263.3 1228 261.2C1230.9 259.2 1242.7 248.1 1245.5 245C1248.3 241.9 1261.6 223.8 1263 222M810.5 75C810.4 76.6 809.1 91 809.2 95C809.4 99 811 119.8 811.8 125C812.5 130.2 818 154.5 819.2 160C820.5 165.5 824.9 189.7 826.8 193.8C828.6 197.8 839.5 208.4 843 211.2C846.5 214.1 866.5 226.4 870.5 228.8C874.5 231.1 890.3 238.8 893 240C895.7 241.2 902.2 243.4 904.2 243.8C906.2 244.1 915.7 244.5 918 244.5C920.3 244.5 927.8 243.9 933 243.8C938.2 243.6 977.4 243.3 983 243C988.6 242.7 999.2 240.9 1003 240C1006.8 239.1 1026.5 233.1 1030.5 231.2C1034.5 229.4 1049.4 219.7 1053 217.5C1056.6 215.3 1072.7 205.2 1075.5 203.8C1078.3 202.3 1085.8 200.3 1088 200C1090.2 199.7 1100.4 199.2 1103 199.5C1105.6 199.8 1117.3 202.9 1120.5 203.8C1123.7 204.6 1139.8 209.3 1143 210C1146.2 210.7 1157.9 212.7 1160.5 213C1163.1 213.3 1173.2 213.7 1175.5 213.8C1177.8 213.8 1187 213.3 1189.2 213.2C1191.5 213.2 1200.8 212.9 1203 212.5C1205.2 212.1 1214.8 209.4 1216.8 208.8C1218.8 208.1 1226.4 204.7 1228 203.8C1229.6 202.8 1236.3 197.5 1237 197M162 608.8C163.2 609 175.2 612 177.5 612.5C179.8 613 188.9 614.1 191.2 614.5C193.6 614.9 203.9 616.9 206.2 617C208.6 617.1 217.7 615.9 220 615.5C222.3 615.1 232.6 613.4 235 612.5C237.4 611.6 247.7 605.1 250 603.8C252.3 602.4 261.6 596.3 263.8 595C265.9 593.7 274.1 588.9 276.2 588C278.4 587.1 287.3 585 290 583.8C292.7 582.5 306.6 574.3 310 572.5C313.4 570.7 329.5 562.4 332.5 561.2C335.5 560.1 345.1 558.1 347.5 558C349.9 557.9 360.5 559.7 362.5 560.5C364.5 561.3 371.1 565.9 372.5 567.5C373.9 569.1 378.9 577.4 380 580C381.1 582.6 385.6 596.8 386.2 600C386.9 603.2 388.4 616.8 388.8 620C389.1 623.2 390.1 637.4 391.2 640C392.4 642.6 401.8 650.5 403.8 652.5C405.8 654.5 414.9 663 416.2 665C417.6 667 420.6 675.1 421.2 677.5C421.9 679.9 423.8 690.9 423.8 694.5C423.8 698.1 421.4 718.6 421.2 722C421.1 725.4 422 734.8 422.5 737C423 739.2 426.6 747.6 427 750C427.4 752.4 427.2 763.8 427 767C426.8 770.2 424.6 785.9 424.5 789.5C424.4 793.1 425.1 809.2 425.5 812C425.9 814.8 429.3 822.7 430 824.5C430.7 826.3 433.4 834.2 433.8 835M1031.8 435.2C1032.2 434.1 1044.8 433 1045.5 433.2C1046.2 433.5 1053.8 443.4 1054.2 444C1054.7 444.6 1058.4 450.8 1058.5 451.5C1058.6 452.2 1058.9 464.1 1058.5 465C1058.1 465.9 1046.8 478.4 1046 478.5C1045.2 478.6 1033.5 468.2 1033 466.8C1032.5 465.3 1031.3 436.4 1031.8 435.2ZM848 75C847.3 75.8 840.2 83.2 839.2 85C838.2 86.8 835.7 94.7 835.5 97.5C835.3 100.3 836 116 836.8 120C837.5 124 843 143.5 844.2 147.5C845.5 151.5 850.4 166.9 851.8 170C853.1 173.1 859.6 183.9 861.8 186.2C863.9 188.6 874.7 196.8 878 198.8C881.3 200.7 898.8 209.3 903 210C907.2 210.7 927.1 207.9 930.5 207.5C933.9 207.1 943.5 205.7 946 205.5C948.5 205.3 958.6 205.4 961.8 205.5C964.9 205.6 982 206.9 985.5 207C989 207.1 1002.9 206.9 1005.5 206.8C1008.1 206.6 1015.8 205.6 1018 205C1020.2 204.4 1029.8 200.9 1033 198.8C1036.2 196.6 1053.6 181.2 1058 177.5C1062.4 173.8 1084.4 155.4 1088 153C1091.6 150.6 1100.1 147.3 1102.5 147.5C1104.9 147.7 1115.6 153.9 1118 155.5C1120.4 157.1 1130.8 166 1133 167.5C1135.2 169 1143.3 173.7 1145.5 174.5C1147.7 175.3 1158.2 176.9 1160.5 177C1162.8 177.1 1172 176.4 1174.2 176.2C1176.5 176.1 1186.1 175.2 1188.5 175C1190.9 174.8 1201.3 174.5 1204.2 174.2C1207.2 174 1223.3 171.7 1225 171.5M162 633C163.8 633.4 181.2 636.8 185 637.5C188.8 638.2 206.2 640.9 210 641.2C213.8 641.6 229.5 642.7 232.5 642.5C235.5 642.3 245 639.6 247.5 638.8C250 637.9 261.1 633.5 263.8 632C266.4 630.5 277.1 622 280 620C282.9 618 296.8 609.2 300 607.5C303.2 605.8 317.4 599.9 320 598.8C322.6 597.6 330.3 593.8 332.5 593.8C334.7 593.7 345.8 596.7 347.5 598C349.2 599.3 353.1 608 353.8 610C354.4 612 355.6 620.1 355.5 622.5C355.4 624.9 352.8 637.4 352.5 640C352.2 642.6 351.8 652.8 352 655C352.2 657.2 354.2 665.8 355 668C355.8 670.2 361.1 679.5 362.5 682C363.9 684.5 371.2 696.8 372.5 699.5C373.8 702.2 377.9 713.4 378.8 715.8C379.6 718.1 382.3 727.3 383 729.5C383.7 731.7 387.2 740.6 388 743.2C388.8 745.9 392 757.7 392.5 762C393 766.3 393.6 791.2 393.8 797C393.9 802.8 394.4 832 394.5 835M969.2 107.5C968.9 105.9 968.5 97 969.2 95C970 93 977.8 83.9 979.2 82.5C980.8 81.1 985.9 78.7 988 78C990.1 77.3 1002.6 74.3 1005.5 74C1008.4 73.7 1022 73.6 1024.2 74C1026.5 74.4 1031.8 77.5 1033 78.8C1034.2 80 1038.6 88.1 1039.2 90C1039.9 91.9 1041 100.3 1041 102.5C1041 104.7 1039.8 115.5 1039.2 117.5C1038.7 119.5 1036 126.5 1034.2 128C1032.5 129.5 1020.4 135.2 1018 135.8C1015.6 136.3 1007 135.9 1004.2 135C1001.5 134.1 985.4 126.6 983 125C980.6 123.4 975.4 116.4 974.2 115C973.1 113.6 969.6 109.1 969.2 107.5ZM162 691.5C164.2 692 185.8 697.2 190 698.2C194.2 699.3 210.8 703.7 215 704.5C219.2 705.3 239.4 707.5 242.5 708.2C245.6 709 252 712.3 253.8 713.2C255.5 714.2 263.4 718.1 264.5 720C265.6 721.9 266.8 734.6 267 737C267.2 739.4 267.4 747.8 267.5 750C267.6 752.2 268.2 762.2 268.8 764.5C269.2 766.8 272.1 776 273.8 778.2C275.4 780.5 287.3 790.6 290 793.2C292.7 795.9 305.2 808.2 307.5 810.8C309.8 813.2 317.3 822.6 318.8 824.5C320.2 826.4 325 834.2 325.5 835"/>
<path stroke-width="2.8" d="M317 265.5C316.6 266.7 313.4 277.7 312.5 280C311.6 282.3 308.4 291.8 306.2 294.5C304.1 297.2 288.3 310.5 285 313.8C281.7 317 267.9 331.9 265 335C262.1 338.1 251.2 350.4 248.8 352.5C246.3 354.6 238.1 359.9 235 361.2C231.9 362.6 214 368.6 210 369.5C206 370.4 188.8 371.8 185 372C181.2 372.2 163.8 372.5 162 372.5M494 233.8C495.1 234.8 506.6 246 507.8 247.5C508.9 249 508.8 251.7 508.5 252.5C508.2 253.3 505.5 256.4 504 257.5C502.5 258.6 491.9 264.2 490.2 266.2C488.6 268.2 484.9 279.4 484 282.5C483.1 285.6 479.8 301.8 479 305C478.2 308.2 474.8 320 473.8 322.5C472.7 325 467.4 334.4 466.2 336.2C465.1 338.1 459.9 345 458.8 346.2C457.6 347.5 453.1 351.2 451.2 352C449.4 352.8 437.5 356.5 435 356.8C432.5 357 422.4 355.8 420 355.5C417.6 355.2 407.3 353.2 405 353.2C402.7 353.3 393.6 355.4 391.2 356.2C388.9 357.1 377.9 362.8 375 363.8C372.1 364.8 358.2 368 355 368.8C351.8 369.5 337.8 372.4 335 373.2C332.2 374.1 322.8 378.6 320 380C317.2 381.4 303.2 389.5 300 391.2C296.8 393 283.2 400.6 280 402C276.8 403.4 264.6 407.6 260 408.8C255.4 409.9 227.7 415.2 222.5 416.2C217.3 417.3 198.6 421.2 195 422C191.4 422.8 178.4 425.9 177 426.2M596.5 75C597.1 76.4 603 89.7 604 92.5C605 95.3 608.6 107.4 609 110C609.4 112.6 610.1 122.6 609.5 125C608.9 127.4 603.3 137 601.5 140C599.7 143 588.2 159.3 586.5 162.5C584.8 165.7 580.8 175.8 580.2 180C579.8 184.2 580.1 209.4 580.2 215C580.4 220.6 582 244.5 582 250C582 255.5 580.5 280.3 580.2 284C580 287.7 579.6 293.7 579 296.5C578.4 299.3 573.9 316 572.8 319C571.6 322 566.5 332 565.2 334C564 336 559.1 342.3 557.8 344C556.4 345.7 549.5 353.6 547.8 355.2C546 356.9 538.1 363.1 535.2 365.2C532.4 367.4 515.1 379.2 511.5 381.5C507.9 383.8 492.9 392.7 490.2 394C487.6 395.3 481.4 397.2 479 397.8C476.6 398.3 463.7 399.9 460 400.7C456.3 401.5 437 406.6 433.2 407.6C429.4 408.6 415.9 412.7 413 413.8C410.1 414.9 399.8 420.4 397.4 421.4C395 422.4 385.3 425.6 383 426.4C380.7 427.2 371.8 431.2 369.1 432C366.4 432.8 351.5 436.1 349 436.5C346.5 436.9 339.6 437.8 338 437C336.4 436.2 332.5 426.7 329.5 426C326.5 425.3 303.6 428.1 300 428.3C296.4 428.5 287 428 284.4 428.2C281.8 428.4 272 430.3 268 430.8C264 431.3 237.9 432.8 234.1 433.9C230.3 435 223.4 443.5 220.3 444.9C217.2 446.3 199.9 448.7 195.2 450.9C190.5 453.1 164.7 470.5 162 472.2M669.5 75C670.1 76.8 675.6 93.9 676.5 97.5C677.4 101.1 679.8 115.8 680.2 120C680.8 124.2 682.5 144.6 682.8 150C683 155.4 683.5 181.5 683.5 187.5C683.5 193.5 682.8 220 682.8 225C682.8 230 683.6 246.8 683.5 250C683.4 253.2 681.6 262.8 681 265C680.4 267.2 677.3 274.9 676 277C674.7 279.1 667.5 288.9 665.2 291.5C663 294.1 649.5 306.4 647.8 309C646 311.6 643.5 321.8 642.8 324C642 326.2 638.9 334.5 637.8 336.5C636.6 338.5 631.3 347 629 349.5C626.7 352 612.6 364.6 609 367.8C605.4 370.9 587.8 386.1 584 389C580.2 391.9 565.5 401.9 561.5 404C557.5 406.1 538.5 413.5 534 415.2C529.5 417 508.7 424.9 505.2 426C501.8 427.1 493.1 428.2 491 428.5C488.9 428.8 481.5 429.3 479 429.5C476.5 429.7 463 430.6 460 430.8C457 431 444.1 431.4 442 432C439.9 432.6 434.5 437.1 433.2 438C431.9 438.9 427.8 442.8 425.6 443.4C423.4 444 408.4 445.7 405.5 445.9C402.6 446.1 392.2 446.1 389.8 446.3C387.4 446.5 378.6 447.7 375.4 447.8C372.2 447.9 353.4 447.2 350.3 447.1C347.2 447 338.4 447.2 336.4 447C334.4 446.8 327.7 443.9 325.8 444C323.9 444.1 314.3 447.3 312.6 447.8C310.9 448.3 306.3 449.3 304.5 450.2C302.7 451.1 292.9 457.6 290.7 458.8C288.5 460 279.4 463.9 277.5 465.3C275.6 466.7 269.2 474.7 266.8 476.6C264.4 478.5 251.7 486.7 248 488.5C244.3 490.3 225.9 496.9 220.3 498.6C214.7 500.3 182.3 508.7 177.6 510C172.9 511.3 163.2 514.6 162 515M1274 260C1273.5 260.7 1269.4 267.1 1268 268.8C1266.6 270.4 1258.5 278.4 1256.8 280.2C1255 282.1 1247.4 289.8 1245.5 291.5C1243.6 293.2 1235.1 299.7 1233 301C1230.9 302.3 1221.2 306.2 1219.2 307.8C1217.2 309.3 1209.9 317.6 1208 320.2C1206.1 322.9 1197.4 338 1195.5 341.5C1193.6 345 1185.7 360.2 1184.2 364C1182.8 367.8 1178.9 385.4 1178 389C1177.1 392.6 1175.1 405.8 1173.5 409C1171.9 412.2 1160.8 425.4 1158 429C1155.2 432.6 1140.2 451.1 1138 454C1135.8 456.9 1131.5 463.3 1130.5 465.5C1129.5 467.7 1127.2 479.6 1126 481.8C1124.8 483.9 1117.1 491.1 1115.5 493C1113.9 494.9 1106.5 503.5 1105.5 505.5C1104.5 507.5 1103.2 514.3 1103 518C1102.8 521.7 1102.3 548 1103 551.8C1103.7 555.5 1112 561.2 1111.8 564.2C1111.5 567.2 1102 585.8 1100.5 589.2C1099 592.8 1093.9 605.2 1093 608C1092.1 610.8 1090 621.9 1089.2 624.2C1088.5 626.6 1085.3 635.3 1084.2 637C1083.2 638.7 1077.2 644.5 1075.5 645.8C1073.8 647 1066.2 650.5 1063 652C1059.8 653.5 1038.9 662.3 1035.5 664.5C1032.1 666.7 1021.6 676.5 1020 679C1018.4 681.5 1017 691.8 1015.5 695.8C1014 699.7 1003.4 724.4 1001.8 728.2C1000.1 732.1 996 741.5 995 744C994 746.5 990.4 756.7 989.2 759.5C988.1 762.3 982 775.1 980.5 779.5C979 783.9 972 810.1 970.5 814.5C969 818.9 962.5 833.4 961.8 835M789 75C789 77.4 788.8 100.1 788.5 105C788.2 109.9 786.1 132.6 785.2 136.2C784.4 139.9 779 149.1 777.8 151.2C776.5 153.4 770.3 162.1 769 163.8C767.7 165.4 762.3 171 761.5 172.5C760.7 174 759.1 180.7 759 182.5C758.9 184.3 759.5 193 760.2 195C761 197 766 205.7 767.8 207.5C769.5 209.3 780.3 216.1 782.8 217.5C785.2 218.9 795.2 223.4 798 225C800.8 226.6 814 234.9 818 237.5C822 240.1 843.6 254.7 848 257.5C852.4 260.3 869.8 270.6 873 272.5C876.2 274.4 885.4 279.8 888 281.5C890.6 283.2 903.1 292.2 905.5 294C907.9 295.8 915.9 302.5 918 303.5C920.1 304.5 929.5 306.6 931.8 306C934 305.4 943.2 297.9 945.5 296.5C947.8 295.1 956.3 290.7 960.5 289C964.7 287.3 992.2 277.7 998 275.2C1003.8 272.8 1028.2 261.2 1033 258.8C1037.8 256.3 1054.6 246.8 1058 245C1061.4 243.2 1072.9 237.3 1075.5 236.2C1078.1 235.2 1088.3 232.5 1090.5 232C1092.7 231.5 1100.8 230.5 1103 230.5C1105.2 230.5 1115.6 231.5 1118 232C1120.4 232.5 1129.8 235.1 1133 236.2C1136.2 237.4 1154.6 245.8 1158 247C1161.4 248.2 1173 250.8 1175.5 251.2C1178 251.7 1186.8 253.2 1189.2 253C1191.7 252.8 1203.4 249.4 1205.5 248.8C1207.6 248.1 1213.6 245.4 1215.5 244.5C1217.4 243.6 1227.2 238.5 1229.2 237C1231.2 235.5 1238.7 228.1 1240.5 226.2C1242.3 224.4 1250.6 215 1251.5 214M162 586.2C163.8 586.6 181.6 590.7 185 591.2C188.4 591.8 201.8 593.3 205 593C208.2 592.7 221.8 588.7 225 587.5C228.2 586.3 242 579 245 577.5C248 576 260 569.8 262.5 568.8C265 567.8 274.1 565.9 276.2 565C278.4 564.1 286.9 559.2 290 557.5C293.1 555.8 311.6 545.5 315 543.8C318.4 542 329.9 536.4 332.5 535.5C335.1 534.6 344.9 533.1 347.5 533C350.1 532.9 362.5 534 365 534.5C367.5 535 377.1 538.1 378.8 538.8C380.4 539.4 384.8 541.6 386.2 542.5C387.8 543.4 395.8 548.9 397.5 550.5C399.2 552.1 405.6 560.2 407.5 562.5C409.4 564.8 418.1 577.1 421.2 579.5C424.4 581.9 442.9 590 447.5 592.5C452.1 595 475.5 608.1 479 610.5C482.5 612.9 490.2 620.7 491.5 622.8C492.8 624.8 495.6 633.2 495.2 636.5C494.9 639.8 487.8 659.5 486.5 664.5C485.2 669.5 479.9 695.9 479 699.5C478.1 703.1 476 707.5 475.5 709.5C475 711.5 473.3 722.5 473 725C472.7 727.5 471.6 738.2 471.2 740.8C470.9 743.3 469.8 754 468.8 757C467.8 760 459.1 775.9 458.8 778.2C458.4 780.6 464.1 785.3 465 787C465.9 788.7 469.4 797.1 470 799.5C470.6 801.9 471.8 814.2 472.5 817C473.2 819.8 478.5 833.6 479 835M536 835C536.9 833.6 544.7 819.9 547.8 817.5C550.8 815.1 570 807 574 805C578 803 595.1 793.8 597.8 792C600.4 790.2 605.7 783.8 606.5 782C607.3 780.2 608 773.2 607.8 769.5C607.5 765.8 602.5 739.6 603.2 735.8C604 731.9 615.2 721.5 617.8 720.8C620.3 720 632.8 725.3 635.2 726.5C637.7 727.7 646.8 733.9 648.5 735.8C650.2 737.6 656 747.2 657 749.5C658 751.8 661 761.5 661 764.5C661 767.5 657.5 783.6 657 787C656.5 790.4 654.2 803.2 654.5 807C654.8 810.8 660.5 832.8 661 835M1000.5 473C999.1 471.5 989.9 462.6 988 460.2C986.1 457.9 978.4 445.9 976.8 444C975.1 442.1 968.5 438.2 968 436.5C967.5 434.8 968.9 425 970.5 422.8C972.1 420.5 985 410.6 988 408.5C991 406.4 1004.5 398.5 1008 397C1011.5 395.5 1028.8 390.2 1031.8 389.8C1034.7 389.3 1042 390.3 1044.2 391C1046.5 391.7 1058.3 397.6 1060.5 399C1062.7 400.4 1070.3 407.4 1071.8 409C1073.2 410.6 1077.1 416.8 1078 419C1078.9 421.2 1082.2 432.6 1082.5 436.5C1082.8 440.4 1082.1 463.9 1081.8 468C1081.4 472.1 1079.1 485.2 1078 488C1076.9 490.8 1069.8 500 1068 503C1066.2 506 1057.4 521.6 1055.5 525.5C1053.6 529.4 1045.7 549.2 1044.2 551.8C1042.8 554.3 1039.3 557.6 1038 557.5C1036.7 557.4 1028.4 552.1 1027.5 550.5C1026.6 548.9 1026.8 540.3 1026.8 538C1026.7 535.7 1027.5 524.1 1026.8 521.8C1026 519.4 1019.2 509.9 1018 508C1016.8 506.1 1012.8 500.3 1011.8 498C1010.8 495.7 1006.4 481.2 1005.5 479.2C1004.6 477.2 1001.9 474.5 1000.5 473ZM893 75C892.6 75.6 889.4 81 888.5 82.5C887.6 84 882.7 91.8 881.8 93.8C880.8 95.8 877.4 105 876.8 107.5C876.1 110 874.2 122 874.2 125C874.3 128 876.7 142.1 877.5 145C878.3 147.9 883.1 159.2 884.2 161.2C885.4 163.2 890.2 168.9 891.8 170C893.2 171.1 900.9 174.5 903 175C905.1 175.5 914.6 176.8 918 176.8C921.4 176.7 942.1 174.1 945.5 173.8C948.9 173.4 958.1 172.5 960.5 172.5C962.9 172.5 972 173.4 975.5 173.8C979 174.1 1000.9 176.7 1004.2 176.8C1007.6 176.8 1015.5 175.4 1018 174.5C1020.5 173.6 1032.5 167.2 1035.5 165C1038.5 162.8 1052.6 150.7 1055.5 147.5C1058.4 144.3 1070 128.2 1071.8 125C1073.5 121.8 1076 111.5 1076.8 107.5C1077.5 103.5 1080.7 77.6 1081 75M1159.2 75C1159.2 76.2 1158.7 87.4 1158.8 90C1158.8 92.6 1159.4 104.9 1160 107.5C1160.6 110.1 1164.9 120.6 1166.8 122.5C1168.6 124.4 1180.1 130.1 1183 131.2C1185.9 132.4 1200.1 136.6 1203 137C1205.9 137.4 1217.7 136.3 1219 136.2M162 657.5C163.8 657.8 215.1 667.2 217.5 667.5C219.9 667.8 232.7 667.6 233.8 667.5C234.8 667.4 246.6 666 248.8 665.8C250.9 665.5 295.1 658.9 297 658.8C298.9 658.6 304.2 661.4 305 662C305.8 662.6 319.1 675.8 320 677C320.9 678.2 331.8 695.7 332.5 697C333.2 698.3 341.5 714.6 342 715.8C342.5 716.9 347.6 729 348 730C348.4 731 352.3 744.4 352.5 745.8C352.7 747.1 354.7 770.2 355 772C355.3 773.8 360.9 797.4 361.2 799.5C361.6 801.6 366.1 833.8 366.2 835M1183 479.2C1184.4 477.1 1192.9 468.5 1195.5 466.8C1198.1 465 1212.5 458.4 1215.5 457.5C1218.5 456.6 1230.5 455.5 1233 455.5C1235.5 455.5 1245.2 456.6 1246.8 458C1248.2 459.4 1251.2 470.4 1251.8 473C1252.3 475.6 1253.9 487.7 1254.2 490.5C1254.6 493.3 1256.7 505.4 1256 508C1255.3 510.6 1247.5 521.3 1245.5 523C1243.5 524.7 1232.8 528.4 1230.5 529.2C1228.2 530.1 1219 533.2 1216.8 533.5C1214.5 533.8 1204 534.1 1201.8 533.5C1199.5 532.9 1190.8 526.8 1189.2 525.5C1187.8 524.2 1183.7 518 1183 516.8C1182.3 515.5 1180.4 511.1 1180 509.2C1179.6 507.4 1177.3 496.6 1177.5 494.2C1177.7 491.9 1181.6 481.4 1183 479.2Z"/>
</g>
</g>
<path d="M321.7 437.1L333.9 424.9L346.1 437.1L333.9 449.3Z" fill="#fff"/>
<path d="M421 437.1L433.2 424.9L445.4 437.1L433.2 449.3Z" fill="#fff"/>
<g font-size="10px" fill="#111" text-anchor="middle">
<text transform="translate(268.8,293.8) rotate(-35)" y="3.6">5,103</text>
<text transform="translate(344.5,293.8) rotate(-60)" y="3.6">5,303</text>
<text transform="translate(447.5,291.2) rotate(-62)" y="3.6">5,402</text>
<text transform="translate(242.5,399.5) rotate(-12)" y="3.6">5,402</text>
<text transform="translate(490.2,266.2) rotate(-55)" y="3.6">5,502</text>
<text transform="translate(547,237.5) rotate(80)" y="3.6">5,602</text>
<text transform="translate(489,350.2) rotate(-50)" y="3.6">5,602</text>
<text transform="translate(231,425) rotate(-12)" y="3.6">5,602</text>
<text transform="translate(560.2,194.5) rotate(80)" y="3.6">5,702</text>
<text transform="translate(546.5,324) rotate(-58)" y="3.6">5,702</text>
<text transform="translate(209,440.2) rotate(-15)" y="3.6">5,702</text>
<text transform="translate(547.8,355.2) rotate(-42)" y="3.6">5,802</text>
<text transform="translate(383,426.4) rotate(-20)" y="3.6">5,802</text>
<text transform="translate(284.4,428.2) rotate(-5)" y="3.6">5,802</text>
<text transform="translate(598.5,209.5) rotate(-85)" y="3.6">5,901</text>
<text transform="translate(393.6,435.2) rotate(-12)" y="3.6">5,901</text>
<text transform="translate(290.7,433.3) rotate(-5)" y="3.6">5,901</text>
<text transform="translate(650.3,80.5) rotate(72)" y="3.6">6,001</text>
<text transform="translate(640.2,252.5) rotate(-70)" y="3.6">6,001</text>
<text transform="translate(476,421) rotate(-5)" y="3.6">6,001</text>
<text transform="translate(375.4,441.5) rotate(-3)" y="3.6">6,001</text>
<text transform="translate(284.4,443.3) rotate(-22)" y="3.6">6,001</text>
<text transform="translate(674.5,280) rotate(-60)" y="3.6">6,101</text>
<text transform="translate(491,428.5) rotate(-5)" y="3.6">6,101</text>
<text transform="translate(389.8,446.3) rotate(-3)" y="3.6">6,101</text>
<text transform="translate(277.5,465.3) rotate(-35)" y="3.6">6,101</text>
<text transform="translate(714,238.8) rotate(75)" y="3.6">6,201</text>
<text transform="translate(618.5,420.2) rotate(25)" y="3.6">6,201</text>
<text transform="translate(376,454) rotate(3)" y="3.6">6,201</text>
<text transform="translate(248.8,523.8) rotate(-12)" y="3.6">6,201</text>
<text transform="translate(753,80) rotate(-75)" y="3.6">6,300</text>
<text transform="translate(754,237.5) rotate(45)" y="3.6">6,300</text>
<text transform="translate(804.2,450.2) rotate(85)" y="3.6">6,300</text>
<text transform="translate(775,568.5) rotate(-30)" y="3.6">6,300</text>
<text transform="translate(622.8,551) rotate(75)" y="3.6">6,300</text>
<text transform="translate(547,539) rotate(-15)" y="3.6">6,300</text>
<text transform="translate(468.8,511.2) rotate(-50)" y="3.6">6,300</text>
<text transform="translate(404.9,475.4) rotate(-15)" y="3.6">6,300</text>
<text transform="translate(177,563.8) rotate(15)" y="3.6">6,300</text>
<text transform="translate(1195.5,275) rotate(-18)" y="3.6">6,300</text>
<text transform="translate(1119.2,422.8) rotate(-80)" y="3.6">6,300</text>
<text transform="translate(974.2,590) rotate(-30)" y="3.6">6,300</text>
<text transform="translate(737.8,764.5) rotate(-58)" y="3.6">6,300</text>
<text transform="translate(777.8,151.2) rotate(-60)" y="3.6">6,400</text>
<text transform="translate(945.5,296.5) rotate(-25)" y="3.6">6,400</text>
<text transform="translate(1229.2,237) rotate(-38)" y="3.6">6,400</text>
<text transform="translate(276.2,565) rotate(-25)" y="3.6">6,400</text>
<text transform="translate(397.5,550.5) rotate(42)" y="3.6">6,400</text>
<text transform="translate(473,725) rotate(-82)" y="3.6">6,400</text>
<text transform="translate(648.5,735.8) rotate(45)" y="3.6">6,400</text>
<text transform="translate(1027,522) rotate(72)" y="3.6">6,400</text>
<text transform="translate(918,244.5) rotate(2)" y="3.6">6,500</text>
<text transform="translate(1203,212.5) rotate(-5)" y="3.6">6,500</text>
<text transform="translate(191.2,614.5) rotate(8)" y="3.6">6,500</text>
<text transform="translate(276.2,588) rotate(-25)" y="3.6">6,500</text>
<text transform="translate(427,750) rotate(82)" y="3.6">6,500</text>
<text transform="translate(1029.2,451.5) rotate(82)" y="3.6">6,500</text>
<text transform="translate(946,205.5) rotate(0)" y="3.6">6,600</text>
<text transform="translate(1188.5,175) rotate(-3)" y="3.6">6,600</text>
<text transform="translate(383,729.5) rotate(75)" y="3.6">6,600</text>
<text transform="translate(888.5,82.5) rotate(-60)" y="3.6">6,700</text>
<text transform="translate(960.5,172.5) rotate(0)" y="3.6">6,700</text>
<text transform="translate(233.8,667.5) rotate(0)" y="3.6">6,700</text>
<text transform="translate(348,730) rotate(70)" y="3.6">6,700</text>
<text transform="translate(969.2,95) rotate(-75)" y="3.6">6,799</text>
<text transform="translate(267.5,750) rotate(87)" y="3.6">6,799</text>
<text transform="translate(1245,268.8) rotate(-45)" y="3.6">6,201</text>
<text transform="translate(1130.5,451.5) rotate(-55)" y="3.6">6,201</text>
<text transform="translate(931.8,674.5) rotate(15)" y="3.6">6,201</text>
<text transform="translate(791.5,752) rotate(-58)" y="3.6">6,201</text>
<text transform="translate(1245.5,291.5) rotate(-40)" y="3.6">6,101</text>
<text transform="translate(1115.5,493) rotate(-50)" y="3.6">6,101</text>
<text transform="translate(995,744) rotate(-70)" y="3.6">6,101</text>
<text transform="translate(1230.5,529.2) rotate(-15)" y="3.6">6,101</text>
<text transform="translate(1177.5,494.2) rotate(-85)" y="3.6">6,101</text>
<text transform="translate(1262.5,309) rotate(-50)" y="3.6">6,001</text>
<text transform="translate(1195.5,422.8) rotate(80)" y="3.6">6,001</text>
<text transform="translate(1174.2,458.5) rotate(-50)" y="3.6">6,001</text>
<text transform="translate(1151.8,508) rotate(85)" y="3.6">6,001</text>
<text transform="translate(1048,707.5) rotate(-50)" y="3.6">6,001</text>
</g>
<g stroke="#ff0000" stroke-width="2" stroke-dasharray="3 2" fill="none"><line x1="162" y1="314" x2="1274" y2="314"/><line x1="465" y1="75" x2="465" y2="835"/></g>
</g>
</svg></body></html>
